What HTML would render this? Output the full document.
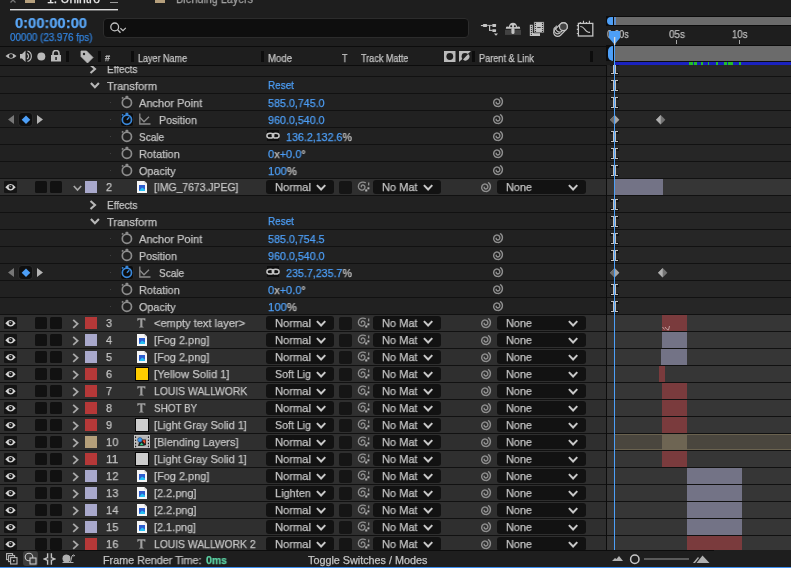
<!DOCTYPE html>
<html><head><meta charset="utf-8">
<style>
html,body{margin:0;padding:0;}
body{width:791px;height:568px;overflow:hidden;position:relative;background:#1e1e1e;font-family:"Liberation Sans",sans-serif;}
.t{position:absolute;white-space:nowrap;line-height:12px;will-change:transform;-webkit-text-stroke:0.25px currentColor;}
svg{display:block;}
</style></head><body>
<div style="position:absolute;left:0px;top:60px;width:606px;height:16px;background:#212121;"></div>
<div style="position:absolute;left:607px;top:60px;width:184px;height:16px;background:#262626;"></div>
<div style="position:absolute;left:0px;top:76px;width:791px;height:1px;background:#111111;"></div>
<svg style="position:absolute;left:89px;top:63.5px;" width="8" height="10" viewBox="0 0 8 10"><path d="M1.5 1 L6 5 L1.5 9" fill="none" stroke="#b8b8b8" stroke-width="2.1"/></svg>
<div class="t" style="left:106.50px;top:63px;font-size:11.5px;color:#c4c4c4;transform:scaleX(0.8698);transform-origin:0 0;">Effects</div>
<div style="position:absolute;left:610px;top:63px;width:9px;height:3px;background:#141414;"></div>
<div style="position:absolute;left:610px;top:72px;width:9px;height:3px;background:#141414;"></div>
<div style="position:absolute;left:611px;top:63px;width:7px;height:1.4px;background:#c2c2c2;"></div>
<div style="position:absolute;left:611px;top:72.6px;width:7px;height:1.4px;background:#c2c2c2;"></div>
<div style="position:absolute;left:612.8px;top:63px;width:1.2px;height:11px;background:#c2c2c2;"></div>
<div style="position:absolute;left:615.2px;top:63px;width:1.2px;height:11px;background:#c2c2c2;"></div>
<div style="position:absolute;left:0px;top:77px;width:606px;height:16px;background:#212121;"></div>
<div style="position:absolute;left:607px;top:77px;width:184px;height:16px;background:#262626;"></div>
<div style="position:absolute;left:0px;top:93px;width:791px;height:1px;background:#111111;"></div>
<svg style="position:absolute;left:89.5px;top:81.5px;" width="10" height="8" viewBox="0 0 10 8"><path d="M0.9 1 L4.9 5.3 L8.9 1" fill="none" stroke="#b8b8b8" stroke-width="2.1"/></svg>
<div class="t" style="left:106.50px;top:80px;font-size:11.5px;color:#c4c4c4;transform:scaleX(0.9625);transform-origin:0 0;">Transform</div>
<div class="t" style="left:267.60px;top:79px;font-size:11.5px;color:#4d9ff7;transform:scaleX(0.8652);transform-origin:0 0;">Reset</div>
<div style="position:absolute;left:610px;top:80px;width:9px;height:3px;background:#141414;"></div>
<div style="position:absolute;left:610px;top:89px;width:9px;height:3px;background:#141414;"></div>
<div style="position:absolute;left:611px;top:80px;width:7px;height:1.4px;background:#c2c2c2;"></div>
<div style="position:absolute;left:611px;top:89.6px;width:7px;height:1.4px;background:#c2c2c2;"></div>
<div style="position:absolute;left:612.8px;top:80px;width:1.2px;height:11px;background:#c2c2c2;"></div>
<div style="position:absolute;left:615.2px;top:80px;width:1.2px;height:11px;background:#c2c2c2;"></div>
<div style="position:absolute;left:0px;top:94px;width:606px;height:16px;background:#212121;"></div>
<div style="position:absolute;left:607px;top:94px;width:184px;height:16px;background:#262626;"></div>
<div style="position:absolute;left:0px;top:110px;width:791px;height:1px;background:#111111;"></div>
<div style="position:absolute;left:110px;top:102px;width:1px;height:1px;background:#404040;"></div>
<svg style="position:absolute;left:120px;top:95px;" width="14" height="14" viewBox="0 0 14 14"><circle cx="6.9" cy="7.7" r="4.6" fill="none" stroke="#8c8c8c" stroke-width="1.7"/><rect x="5.5" y="0.7" width="2.8" height="2.8" rx="0.8" fill="#8c8c8c"/><path d="M1.9 3.6 L3.2 2.3" stroke="#8c8c8c" stroke-width="1.4"/></svg>
<div class="t" style="left:139.20px;top:97px;font-size:11.5px;color:#c4c4c4;transform:scaleX(0.9598);transform-origin:0 0;">Anchor Point</div>
<div class="t" style="left:268.00px;top:97px;font-size:11.5px;color:#4d9ff7;transform:scaleX(0.9317);transform-origin:0 0;">585.0,745.0</div>
<svg style="position:absolute;left:491px;top:95.5px;" width="13" height="13" viewBox="0 0 13 13"><path d="M5.2 6.3 L5.2 6.6 L5.3 6.9 L5.4 7.2 L5.6 7.4 L5.9 7.7 L6.2 7.8 L6.6 7.9 L7.0 7.9 L7.4 7.8 L7.8 7.6 L8.2 7.3 L8.5 7.0 L8.7 6.5 L8.8 6.0 L8.8 5.5 L8.7 5.0 L8.5 4.4 L8.2 4.0 L7.7 3.6 L7.2 3.3 L6.6 3.1 L5.9 3.0 L5.2 3.1 L4.6 3.3 L4.0 3.7 L3.5 4.2 L3.1 4.9 L2.8 5.6 L2.7 6.4 L2.7 7.2 L3.0 8.0 L3.4 8.7 L3.9 9.4 L4.6 9.9 L5.4 10.3 L6.3 10.4 L7.3 10.5 L8.2 10.2 L9.1 9.8 L9.9 9.3 L10.5 8.5 L11.0 7.6 L11.3 6.6 L11.4 5.5 L11.3 4.5 L10.9 3.4 L10.3 2.5 L9.5 1.7" fill="none" stroke="#8e8e8e" stroke-width="1.45" stroke-linecap="round"/></svg>
<div style="position:absolute;left:610px;top:97px;width:9px;height:3px;background:#141414;"></div>
<div style="position:absolute;left:610px;top:106px;width:9px;height:3px;background:#141414;"></div>
<div style="position:absolute;left:611px;top:97px;width:7px;height:1.4px;background:#c2c2c2;"></div>
<div style="position:absolute;left:611px;top:106.6px;width:7px;height:1.4px;background:#c2c2c2;"></div>
<div style="position:absolute;left:612.8px;top:97px;width:1.2px;height:11px;background:#c2c2c2;"></div>
<div style="position:absolute;left:615.2px;top:97px;width:1.2px;height:11px;background:#c2c2c2;"></div>
<div style="position:absolute;left:0px;top:111px;width:606px;height:16px;background:#212121;"></div>
<div style="position:absolute;left:607px;top:111px;width:184px;height:16px;background:#262626;"></div>
<div style="position:absolute;left:0px;top:127px;width:791px;height:1px;background:#111111;"></div>
<div style="position:absolute;left:110px;top:119px;width:1px;height:1px;background:#404040;"></div>
<svg style="position:absolute;left:8px;top:115px;" width="7" height="9" viewBox="0 0 7 9"><path d="M6 0 L0 4.5 L6 9Z" fill="#777"/></svg>
<div style="position:absolute;left:19px;top:113px;width:13px;height:13px;background:#0f0f0f;border-radius:3px;box-shadow:0 0 0 0.5px #333;"></div>
<svg style="position:absolute;left:21px;top:115px;" width="10" height="10" viewBox="0 0 10 10"><path d="M5 0.5 L9.3 4.8 L5 9.1 L0.7 4.8Z" fill="#4d9ff7"/></svg>
<svg style="position:absolute;left:37px;top:115px;" width="7" height="9" viewBox="0 0 7 9"><path d="M0 0 L6 4.5 L0 9Z" fill="#b4b4b4"/></svg>
<div style="position:absolute;left:120px;top:111.5px;width:14px;height:15px;background:#0c0c0c;border-radius:3px;box-sizing:border-box;border:1px solid #262626;"></div>
<svg style="position:absolute;left:120px;top:112px;" width="14" height="14" viewBox="0 0 14 14"><circle cx="6.9" cy="7.7" r="4.6" fill="none" stroke="#3a88da" stroke-width="1.7"/><rect x="5.5" y="0.7" width="2.8" height="2.8" rx="0.8" fill="#3a88da"/><path d="M1.9 3.6 L3.2 2.3" stroke="#3a88da" stroke-width="1.4"/><path d="M6.9 7.7 L9.3 5.3" stroke="#3a88da" stroke-width="1.5"/></svg>
<svg style="position:absolute;left:139px;top:113px;" width="12" height="12" viewBox="0 0 12 12"><path d="M0.8 0.5 V11 H11.5" fill="none" stroke="#8a8a8a" stroke-width="1.3"/><path d="M1 4.5 L5 8.8 L10 3.8" fill="none" stroke="#8a8a8a" stroke-width="1.3"/></svg>
<div class="t" style="left:158.80px;top:114px;font-size:11.5px;color:#c4c4c4;transform:scaleX(0.9291);transform-origin:0 0;">Position</div>
<div class="t" style="left:268.00px;top:114px;font-size:11.5px;color:#4d9ff7;transform:scaleX(0.9317);transform-origin:0 0;">960.0,540.0</div>
<svg style="position:absolute;left:491px;top:112.5px;" width="13" height="13" viewBox="0 0 13 13"><path d="M5.2 6.3 L5.2 6.6 L5.3 6.9 L5.4 7.2 L5.6 7.4 L5.9 7.7 L6.2 7.8 L6.6 7.9 L7.0 7.9 L7.4 7.8 L7.8 7.6 L8.2 7.3 L8.5 7.0 L8.7 6.5 L8.8 6.0 L8.8 5.5 L8.7 5.0 L8.5 4.4 L8.2 4.0 L7.7 3.6 L7.2 3.3 L6.6 3.1 L5.9 3.0 L5.2 3.1 L4.6 3.3 L4.0 3.7 L3.5 4.2 L3.1 4.9 L2.8 5.6 L2.7 6.4 L2.7 7.2 L3.0 8.0 L3.4 8.7 L3.9 9.4 L4.6 9.9 L5.4 10.3 L6.3 10.4 L7.3 10.5 L8.2 10.2 L9.1 9.8 L9.9 9.3 L10.5 8.5 L11.0 7.6 L11.3 6.6 L11.4 5.5 L11.3 4.5 L10.9 3.4 L10.3 2.5 L9.5 1.7" fill="none" stroke="#8e8e8e" stroke-width="1.45" stroke-linecap="round"/></svg>
<svg style="position:absolute;left:610px;top:115px;" width="10" height="10" viewBox="0 0 10 10"><path d="M4.7 0 L9.4 4.7 L4.7 9.4 L0 4.7Z" fill="#a8a8a8"/><path d="M4.7 0 L0 4.7 L4.7 9.4Z" fill="#6e6e6e"/></svg>
<svg style="position:absolute;left:656px;top:115px;" width="10" height="10" viewBox="0 0 10 10"><path d="M4.7 0 L9.4 4.7 L4.7 9.4 L0 4.7Z" fill="#747474"/><path d="M4.7 0 L0 4.7 L4.7 9.4Z" fill="#b0b0b0"/></svg>
<div style="position:absolute;left:0px;top:128px;width:606px;height:16px;background:#212121;"></div>
<div style="position:absolute;left:607px;top:128px;width:184px;height:16px;background:#262626;"></div>
<div style="position:absolute;left:0px;top:144px;width:791px;height:1px;background:#111111;"></div>
<div style="position:absolute;left:110px;top:136px;width:1px;height:1px;background:#404040;"></div>
<svg style="position:absolute;left:120px;top:129px;" width="14" height="14" viewBox="0 0 14 14"><circle cx="6.9" cy="7.7" r="4.6" fill="none" stroke="#8c8c8c" stroke-width="1.7"/><rect x="5.5" y="0.7" width="2.8" height="2.8" rx="0.8" fill="#8c8c8c"/><path d="M1.9 3.6 L3.2 2.3" stroke="#8c8c8c" stroke-width="1.4"/></svg>
<div class="t" style="left:139.20px;top:131px;font-size:11.5px;color:#c4c4c4;transform:scaleX(0.8765);transform-origin:0 0;">Scale</div>
<div style="position:absolute;left:267px;top:130px;width:12px;height:11px;background:#0e0e0e;"></div>
<svg style="position:absolute;left:265px;top:130px;" width="16" height="11" viewBox="0 0 16 11"><ellipse cx="5.3" cy="5.7" rx="3.4" ry="2.4" fill="none" stroke="#c4c4c4" stroke-width="1.5"/><ellipse cx="10.7" cy="5.7" rx="3.4" ry="2.4" fill="none" stroke="#c4c4c4" stroke-width="1.5"/><path d="M7.2 3.7 A3.4 2.4 0 0 1 8.7 5.2" fill="none" stroke="#c4c4c4" stroke-width="1.5"/></svg>
<div class="t" style="left:286.00px;top:131px;font-size:11.5px;color:#4d9ff7;transform:scaleX(0.9296);transform-origin:0 0;">136.2,132.6<span style="color:#c4c4c4">%</span></div>
<svg style="position:absolute;left:491px;top:129.5px;" width="13" height="13" viewBox="0 0 13 13"><path d="M5.2 6.3 L5.2 6.6 L5.3 6.9 L5.4 7.2 L5.6 7.4 L5.9 7.7 L6.2 7.8 L6.6 7.9 L7.0 7.9 L7.4 7.8 L7.8 7.6 L8.2 7.3 L8.5 7.0 L8.7 6.5 L8.8 6.0 L8.8 5.5 L8.7 5.0 L8.5 4.4 L8.2 4.0 L7.7 3.6 L7.2 3.3 L6.6 3.1 L5.9 3.0 L5.2 3.1 L4.6 3.3 L4.0 3.7 L3.5 4.2 L3.1 4.9 L2.8 5.6 L2.7 6.4 L2.7 7.2 L3.0 8.0 L3.4 8.7 L3.9 9.4 L4.6 9.9 L5.4 10.3 L6.3 10.4 L7.3 10.5 L8.2 10.2 L9.1 9.8 L9.9 9.3 L10.5 8.5 L11.0 7.6 L11.3 6.6 L11.4 5.5 L11.3 4.5 L10.9 3.4 L10.3 2.5 L9.5 1.7" fill="none" stroke="#8e8e8e" stroke-width="1.45" stroke-linecap="round"/></svg>
<div style="position:absolute;left:610px;top:131px;width:9px;height:3px;background:#141414;"></div>
<div style="position:absolute;left:610px;top:140px;width:9px;height:3px;background:#141414;"></div>
<div style="position:absolute;left:611px;top:131px;width:7px;height:1.4px;background:#c2c2c2;"></div>
<div style="position:absolute;left:611px;top:140.6px;width:7px;height:1.4px;background:#c2c2c2;"></div>
<div style="position:absolute;left:612.8px;top:131px;width:1.2px;height:11px;background:#c2c2c2;"></div>
<div style="position:absolute;left:615.2px;top:131px;width:1.2px;height:11px;background:#c2c2c2;"></div>
<div style="position:absolute;left:0px;top:145px;width:606px;height:16px;background:#212121;"></div>
<div style="position:absolute;left:607px;top:145px;width:184px;height:16px;background:#262626;"></div>
<div style="position:absolute;left:0px;top:161px;width:791px;height:1px;background:#111111;"></div>
<div style="position:absolute;left:110px;top:153px;width:1px;height:1px;background:#404040;"></div>
<svg style="position:absolute;left:120px;top:146px;" width="14" height="14" viewBox="0 0 14 14"><circle cx="6.9" cy="7.7" r="4.6" fill="none" stroke="#8c8c8c" stroke-width="1.7"/><rect x="5.5" y="0.7" width="2.8" height="2.8" rx="0.8" fill="#8c8c8c"/><path d="M1.9 3.6 L3.2 2.3" stroke="#8c8c8c" stroke-width="1.4"/></svg>
<div class="t" style="left:139.20px;top:148px;font-size:11.5px;color:#c4c4c4;transform:scaleX(0.9522);transform-origin:0 0;">Rotation</div>
<div class="t" style="left:268.00px;top:148px;font-size:11.5px;color:#4d9ff7;transform:scaleX(0.9582);transform-origin:0 0;">0<span style="color:#c4c4c4">x</span>+0.0<span style="color:#c4c4c4">°</span></div>
<svg style="position:absolute;left:491px;top:146.5px;" width="13" height="13" viewBox="0 0 13 13"><path d="M5.2 6.3 L5.2 6.6 L5.3 6.9 L5.4 7.2 L5.6 7.4 L5.9 7.7 L6.2 7.8 L6.6 7.9 L7.0 7.9 L7.4 7.8 L7.8 7.6 L8.2 7.3 L8.5 7.0 L8.7 6.5 L8.8 6.0 L8.8 5.5 L8.7 5.0 L8.5 4.4 L8.2 4.0 L7.7 3.6 L7.2 3.3 L6.6 3.1 L5.9 3.0 L5.2 3.1 L4.6 3.3 L4.0 3.7 L3.5 4.2 L3.1 4.9 L2.8 5.6 L2.7 6.4 L2.7 7.2 L3.0 8.0 L3.4 8.7 L3.9 9.4 L4.6 9.9 L5.4 10.3 L6.3 10.4 L7.3 10.5 L8.2 10.2 L9.1 9.8 L9.9 9.3 L10.5 8.5 L11.0 7.6 L11.3 6.6 L11.4 5.5 L11.3 4.5 L10.9 3.4 L10.3 2.5 L9.5 1.7" fill="none" stroke="#8e8e8e" stroke-width="1.45" stroke-linecap="round"/></svg>
<div style="position:absolute;left:610px;top:148px;width:9px;height:3px;background:#141414;"></div>
<div style="position:absolute;left:610px;top:157px;width:9px;height:3px;background:#141414;"></div>
<div style="position:absolute;left:611px;top:148px;width:7px;height:1.4px;background:#c2c2c2;"></div>
<div style="position:absolute;left:611px;top:157.6px;width:7px;height:1.4px;background:#c2c2c2;"></div>
<div style="position:absolute;left:612.8px;top:148px;width:1.2px;height:11px;background:#c2c2c2;"></div>
<div style="position:absolute;left:615.2px;top:148px;width:1.2px;height:11px;background:#c2c2c2;"></div>
<div style="position:absolute;left:0px;top:162px;width:606px;height:16px;background:#212121;"></div>
<div style="position:absolute;left:607px;top:162px;width:184px;height:16px;background:#262626;"></div>
<div style="position:absolute;left:0px;top:178px;width:791px;height:1px;background:#111111;"></div>
<div style="position:absolute;left:110px;top:170px;width:1px;height:1px;background:#404040;"></div>
<svg style="position:absolute;left:120px;top:163px;" width="14" height="14" viewBox="0 0 14 14"><circle cx="6.9" cy="7.7" r="4.6" fill="none" stroke="#8c8c8c" stroke-width="1.7"/><rect x="5.5" y="0.7" width="2.8" height="2.8" rx="0.8" fill="#8c8c8c"/><path d="M1.9 3.6 L3.2 2.3" stroke="#8c8c8c" stroke-width="1.4"/></svg>
<div class="t" style="left:139.20px;top:165px;font-size:11.5px;color:#c4c4c4;transform:scaleX(0.9385);transform-origin:0 0;">Opacity</div>
<div class="t" style="left:268.00px;top:165px;font-size:11.5px;color:#4d9ff7;transform:scaleX(0.9796);transform-origin:0 0;">100<span style="color:#c4c4c4">%</span></div>
<svg style="position:absolute;left:491px;top:163.5px;" width="13" height="13" viewBox="0 0 13 13"><path d="M5.2 6.3 L5.2 6.6 L5.3 6.9 L5.4 7.2 L5.6 7.4 L5.9 7.7 L6.2 7.8 L6.6 7.9 L7.0 7.9 L7.4 7.8 L7.8 7.6 L8.2 7.3 L8.5 7.0 L8.7 6.5 L8.8 6.0 L8.8 5.5 L8.7 5.0 L8.5 4.4 L8.2 4.0 L7.7 3.6 L7.2 3.3 L6.6 3.1 L5.9 3.0 L5.2 3.1 L4.6 3.3 L4.0 3.7 L3.5 4.2 L3.1 4.9 L2.8 5.6 L2.7 6.4 L2.7 7.2 L3.0 8.0 L3.4 8.7 L3.9 9.4 L4.6 9.9 L5.4 10.3 L6.3 10.4 L7.3 10.5 L8.2 10.2 L9.1 9.8 L9.9 9.3 L10.5 8.5 L11.0 7.6 L11.3 6.6 L11.4 5.5 L11.3 4.5 L10.9 3.4 L10.3 2.5 L9.5 1.7" fill="none" stroke="#8e8e8e" stroke-width="1.45" stroke-linecap="round"/></svg>
<div style="position:absolute;left:610px;top:165px;width:9px;height:3px;background:#141414;"></div>
<div style="position:absolute;left:610px;top:174px;width:9px;height:3px;background:#141414;"></div>
<div style="position:absolute;left:611px;top:165px;width:7px;height:1.4px;background:#c2c2c2;"></div>
<div style="position:absolute;left:611px;top:174.6px;width:7px;height:1.4px;background:#c2c2c2;"></div>
<div style="position:absolute;left:612.8px;top:165px;width:1.2px;height:11px;background:#c2c2c2;"></div>
<div style="position:absolute;left:615.2px;top:165px;width:1.2px;height:11px;background:#c2c2c2;"></div>
<div style="position:absolute;left:0px;top:179px;width:606px;height:16px;background:#2f2f2f;"></div>
<div style="position:absolute;left:607px;top:179px;width:184px;height:16px;background:#363636;"></div>
<div style="position:absolute;left:0px;top:195px;width:791px;height:1px;background:#111111;"></div>
<div style="position:absolute;left:4px;top:180.5px;width:12.5px;height:12.5px;background:#141414;border-radius:1px;"></div>
<svg style="position:absolute;left:5px;top:182.5px;" width="11" height="9" viewBox="0 0 11 9"><path d="M0.3 4.2 Q5.5 -2.3 10.7 4.2 Q5.5 10.7 0.3 4.2Z" fill="#d4d4d4"/><circle cx="5.7" cy="4.1" r="2.1" fill="#141414"/><circle cx="5.2" cy="3.5" r="0.7" fill="#909090"/></svg>
<div style="position:absolute;left:35px;top:181px;width:11.5px;height:11.5px;background:#111111;border-radius:1.5px;"></div>
<div style="position:absolute;left:49.6px;top:181px;width:12px;height:11.5px;background:#111111;border-radius:1.5px;"></div>
<svg style="position:absolute;left:73px;top:185px;" width="9" height="7" viewBox="0 0 9 7"><path d="M0.8 1 L4.5 5 L8.2 1" fill="none" stroke="#a8a8a8" stroke-width="1.7"/></svg>
<div style="position:absolute;left:85px;top:181px;width:12px;height:12px;background:#a9a9cc;"></div>
<div class="t" style="left:106.20px;top:181px;font-size:11.5px;color:#c4c4c4;transform:scaleX(0.9375);transform-origin:0 0;">2</div>
<svg style="position:absolute;left:137px;top:181px;" width="10" height="12" viewBox="0 0 10 12"><path d="M0 0 H7.4 L10 2.6 V12 H0Z" fill="#f6f6f6"/><path d="M7.4 0 V2.6 H10" fill="#cfcfcf"/><rect x="2" y="4" width="6" height="6" fill="#2f5ed0"/><path d="M2 10 L5 6.4 L8 8.6 V10Z" fill="#26c0f2"/></svg>
<div class="t" style="left:154.20px;top:181px;font-size:11.5px;color:#c4c4c4;transform:scaleX(0.9046);transform-origin:0 0;">[IMG_7673.JPEG]</div>
<div style="position:absolute;left:266px;top:180px;width:68px;height:14px;background:#121212;border-radius:3px;"></div>
<div class="t" style="left:274.50px;top:181px;font-size:11.5px;color:#c4c4c4;transform:scaleX(0.9717);transform-origin:0 0;">Normal</div>
<svg style="position:absolute;left:316px;top:183.5px;" width="10" height="8" viewBox="0 0 10 8"><path d="M0.9 1.1 L5.1 5.5 L9.3 1.1" fill="none" stroke="#c8c8c8" stroke-width="2"/></svg>
<div style="position:absolute;left:339px;top:181px;width:13px;height:13px;background:#151515;border-radius:2px;"></div>
<svg style="position:absolute;left:355.5px;top:179.5px;" width="14" height="14" viewBox="0 0 14 14"><path d="M5.4 6.8 L5.3 6.6 L5.3 6.3 L5.3 6.0 L5.5 5.8 L5.6 5.5 L5.9 5.3 L6.2 5.1 L6.6 5.0 L7.0 5.0 L7.4 5.1 L7.8 5.3 L8.2 5.5 L8.5 5.9 L8.8 6.3 L8.9 6.9 L8.9 7.4 L8.8 8.0 L8.6 8.5 L8.3 9.0 L7.8 9.4 L7.2 9.8 L6.6 10.0 L5.9 10.1 L5.2 10.0 L4.5 9.7 L3.9 9.4 L3.3 8.8 L2.8 8.1 L2.5 7.4 L2.4 6.6 L2.5 5.7 L2.7 4.8 L3.1 4.0 L3.7 3.3 L4.4 2.7 L5.3 2.3 L6.3 2.1 L7.3 2.1 L8.3 2.3 L9.3 2.7" fill="none" stroke="#8e8e8e" stroke-width="1.3" stroke-linecap="round"/><rect x="12.1" y="2.5" width="1.2" height="2.9" fill="#9a9a9a"/><rect x="9.2" y="9.4" width="2.1" height="2.1" fill="#b0b0b0"/><rect x="11.4" y="7.3" width="2" height="2" fill="#b0b0b0"/></svg>
<div style="position:absolute;left:373px;top:180px;width:68px;height:14px;background:#121212;border-radius:3px;"></div>
<div class="t" style="left:381.50px;top:181px;font-size:11.5px;color:#c4c4c4;transform:scaleX(0.9582);transform-origin:0 0;">No Mat</div>
<svg style="position:absolute;left:423px;top:183.5px;" width="10" height="8" viewBox="0 0 10 8"><path d="M0.9 1.1 L5.1 5.5 L9.3 1.1" fill="none" stroke="#c8c8c8" stroke-width="2"/></svg>
<svg style="position:absolute;left:478.5px;top:180.5px;" width="13" height="13" viewBox="0 0 13 13"><path d="M5.2 6.3 L5.2 6.6 L5.3 6.9 L5.4 7.2 L5.6 7.4 L5.9 7.7 L6.2 7.8 L6.6 7.9 L7.0 7.9 L7.4 7.8 L7.8 7.6 L8.2 7.3 L8.5 7.0 L8.7 6.5 L8.8 6.0 L8.8 5.5 L8.7 5.0 L8.5 4.4 L8.2 4.0 L7.7 3.6 L7.2 3.3 L6.6 3.1 L5.9 3.0 L5.2 3.1 L4.6 3.3 L4.0 3.7 L3.5 4.2 L3.1 4.9 L2.8 5.6 L2.7 6.4 L2.7 7.2 L3.0 8.0 L3.4 8.7 L3.9 9.4 L4.6 9.9 L5.4 10.3 L6.3 10.4 L7.3 10.5 L8.2 10.2 L9.1 9.8 L9.9 9.3 L10.5 8.5 L11.0 7.6 L11.3 6.6 L11.4 5.5 L11.3 4.5 L10.9 3.4 L10.3 2.5 L9.5 1.7" fill="none" stroke="#8e8e8e" stroke-width="1.45" stroke-linecap="round"/></svg>
<div style="position:absolute;left:497px;top:180px;width:89px;height:14px;background:#121212;border-radius:3px;"></div>
<div class="t" style="left:505.60px;top:181px;font-size:11.5px;color:#c4c4c4;transform:scaleX(0.9455);transform-origin:0 0;">None</div>
<svg style="position:absolute;left:568px;top:183.5px;" width="10" height="8" viewBox="0 0 10 8"><path d="M0.9 1.1 L5.1 5.5 L9.3 1.1" fill="none" stroke="#c8c8c8" stroke-width="2"/></svg>
<div style="position:absolute;left:615px;top:179px;width:48px;height:16px;background:#737386;"></div>
<div style="position:absolute;left:0px;top:196px;width:606px;height:16px;background:#212121;"></div>
<div style="position:absolute;left:607px;top:196px;width:184px;height:16px;background:#262626;"></div>
<div style="position:absolute;left:0px;top:212px;width:791px;height:1px;background:#111111;"></div>
<svg style="position:absolute;left:89px;top:199.5px;" width="8" height="10" viewBox="0 0 8 10"><path d="M1.5 1 L6 5 L1.5 9" fill="none" stroke="#b8b8b8" stroke-width="2.1"/></svg>
<div class="t" style="left:106.50px;top:199px;font-size:11.5px;color:#c4c4c4;transform:scaleX(0.8698);transform-origin:0 0;">Effects</div>
<div style="position:absolute;left:610px;top:199px;width:9px;height:3px;background:#141414;"></div>
<div style="position:absolute;left:610px;top:208px;width:9px;height:3px;background:#141414;"></div>
<div style="position:absolute;left:611px;top:199px;width:7px;height:1.4px;background:#c2c2c2;"></div>
<div style="position:absolute;left:611px;top:208.6px;width:7px;height:1.4px;background:#c2c2c2;"></div>
<div style="position:absolute;left:612.8px;top:199px;width:1.2px;height:11px;background:#c2c2c2;"></div>
<div style="position:absolute;left:615.2px;top:199px;width:1.2px;height:11px;background:#c2c2c2;"></div>
<div style="position:absolute;left:0px;top:213px;width:606px;height:16px;background:#212121;"></div>
<div style="position:absolute;left:607px;top:213px;width:184px;height:16px;background:#262626;"></div>
<div style="position:absolute;left:0px;top:229px;width:791px;height:1px;background:#111111;"></div>
<svg style="position:absolute;left:89.5px;top:217.5px;" width="10" height="8" viewBox="0 0 10 8"><path d="M0.9 1 L4.9 5.3 L8.9 1" fill="none" stroke="#b8b8b8" stroke-width="2.1"/></svg>
<div class="t" style="left:106.50px;top:216px;font-size:11.5px;color:#c4c4c4;transform:scaleX(0.9625);transform-origin:0 0;">Transform</div>
<div class="t" style="left:267.60px;top:215px;font-size:11.5px;color:#4d9ff7;transform:scaleX(0.8652);transform-origin:0 0;">Reset</div>
<div style="position:absolute;left:610px;top:216px;width:9px;height:3px;background:#141414;"></div>
<div style="position:absolute;left:610px;top:225px;width:9px;height:3px;background:#141414;"></div>
<div style="position:absolute;left:611px;top:216px;width:7px;height:1.4px;background:#c2c2c2;"></div>
<div style="position:absolute;left:611px;top:225.6px;width:7px;height:1.4px;background:#c2c2c2;"></div>
<div style="position:absolute;left:612.8px;top:216px;width:1.2px;height:11px;background:#c2c2c2;"></div>
<div style="position:absolute;left:615.2px;top:216px;width:1.2px;height:11px;background:#c2c2c2;"></div>
<div style="position:absolute;left:0px;top:230px;width:606px;height:16px;background:#212121;"></div>
<div style="position:absolute;left:607px;top:230px;width:184px;height:16px;background:#262626;"></div>
<div style="position:absolute;left:0px;top:246px;width:791px;height:1px;background:#111111;"></div>
<div style="position:absolute;left:110px;top:238px;width:1px;height:1px;background:#404040;"></div>
<svg style="position:absolute;left:120px;top:231px;" width="14" height="14" viewBox="0 0 14 14"><circle cx="6.9" cy="7.7" r="4.6" fill="none" stroke="#8c8c8c" stroke-width="1.7"/><rect x="5.5" y="0.7" width="2.8" height="2.8" rx="0.8" fill="#8c8c8c"/><path d="M1.9 3.6 L3.2 2.3" stroke="#8c8c8c" stroke-width="1.4"/></svg>
<div class="t" style="left:139.20px;top:233px;font-size:11.5px;color:#c4c4c4;transform:scaleX(0.9598);transform-origin:0 0;">Anchor Point</div>
<div class="t" style="left:268.00px;top:233px;font-size:11.5px;color:#4d9ff7;transform:scaleX(0.9317);transform-origin:0 0;">585.0,754.5</div>
<svg style="position:absolute;left:491px;top:231.5px;" width="13" height="13" viewBox="0 0 13 13"><path d="M5.2 6.3 L5.2 6.6 L5.3 6.9 L5.4 7.2 L5.6 7.4 L5.9 7.7 L6.2 7.8 L6.6 7.9 L7.0 7.9 L7.4 7.8 L7.8 7.6 L8.2 7.3 L8.5 7.0 L8.7 6.5 L8.8 6.0 L8.8 5.5 L8.7 5.0 L8.5 4.4 L8.2 4.0 L7.7 3.6 L7.2 3.3 L6.6 3.1 L5.9 3.0 L5.2 3.1 L4.6 3.3 L4.0 3.7 L3.5 4.2 L3.1 4.9 L2.8 5.6 L2.7 6.4 L2.7 7.2 L3.0 8.0 L3.4 8.7 L3.9 9.4 L4.6 9.9 L5.4 10.3 L6.3 10.4 L7.3 10.5 L8.2 10.2 L9.1 9.8 L9.9 9.3 L10.5 8.5 L11.0 7.6 L11.3 6.6 L11.4 5.5 L11.3 4.5 L10.9 3.4 L10.3 2.5 L9.5 1.7" fill="none" stroke="#8e8e8e" stroke-width="1.45" stroke-linecap="round"/></svg>
<div style="position:absolute;left:610px;top:233px;width:9px;height:3px;background:#141414;"></div>
<div style="position:absolute;left:610px;top:242px;width:9px;height:3px;background:#141414;"></div>
<div style="position:absolute;left:611px;top:233px;width:7px;height:1.4px;background:#c2c2c2;"></div>
<div style="position:absolute;left:611px;top:242.6px;width:7px;height:1.4px;background:#c2c2c2;"></div>
<div style="position:absolute;left:612.8px;top:233px;width:1.2px;height:11px;background:#c2c2c2;"></div>
<div style="position:absolute;left:615.2px;top:233px;width:1.2px;height:11px;background:#c2c2c2;"></div>
<div style="position:absolute;left:0px;top:247px;width:606px;height:16px;background:#212121;"></div>
<div style="position:absolute;left:607px;top:247px;width:184px;height:16px;background:#262626;"></div>
<div style="position:absolute;left:0px;top:263px;width:791px;height:1px;background:#111111;"></div>
<div style="position:absolute;left:110px;top:255px;width:1px;height:1px;background:#404040;"></div>
<svg style="position:absolute;left:120px;top:248px;" width="14" height="14" viewBox="0 0 14 14"><circle cx="6.9" cy="7.7" r="4.6" fill="none" stroke="#8c8c8c" stroke-width="1.7"/><rect x="5.5" y="0.7" width="2.8" height="2.8" rx="0.8" fill="#8c8c8c"/><path d="M1.9 3.6 L3.2 2.3" stroke="#8c8c8c" stroke-width="1.4"/></svg>
<div class="t" style="left:139.20px;top:250px;font-size:11.5px;color:#c4c4c4;transform:scaleX(0.9291);transform-origin:0 0;">Position</div>
<div class="t" style="left:268.00px;top:250px;font-size:11.5px;color:#4d9ff7;transform:scaleX(0.9317);transform-origin:0 0;">960.0,540.0</div>
<svg style="position:absolute;left:491px;top:248.5px;" width="13" height="13" viewBox="0 0 13 13"><path d="M5.2 6.3 L5.2 6.6 L5.3 6.9 L5.4 7.2 L5.6 7.4 L5.9 7.7 L6.2 7.8 L6.6 7.9 L7.0 7.9 L7.4 7.8 L7.8 7.6 L8.2 7.3 L8.5 7.0 L8.7 6.5 L8.8 6.0 L8.8 5.5 L8.7 5.0 L8.5 4.4 L8.2 4.0 L7.7 3.6 L7.2 3.3 L6.6 3.1 L5.9 3.0 L5.2 3.1 L4.6 3.3 L4.0 3.7 L3.5 4.2 L3.1 4.9 L2.8 5.6 L2.7 6.4 L2.7 7.2 L3.0 8.0 L3.4 8.7 L3.9 9.4 L4.6 9.9 L5.4 10.3 L6.3 10.4 L7.3 10.5 L8.2 10.2 L9.1 9.8 L9.9 9.3 L10.5 8.5 L11.0 7.6 L11.3 6.6 L11.4 5.5 L11.3 4.5 L10.9 3.4 L10.3 2.5 L9.5 1.7" fill="none" stroke="#8e8e8e" stroke-width="1.45" stroke-linecap="round"/></svg>
<div style="position:absolute;left:610px;top:250px;width:9px;height:3px;background:#141414;"></div>
<div style="position:absolute;left:610px;top:259px;width:9px;height:3px;background:#141414;"></div>
<div style="position:absolute;left:611px;top:250px;width:7px;height:1.4px;background:#c2c2c2;"></div>
<div style="position:absolute;left:611px;top:259.6px;width:7px;height:1.4px;background:#c2c2c2;"></div>
<div style="position:absolute;left:612.8px;top:250px;width:1.2px;height:11px;background:#c2c2c2;"></div>
<div style="position:absolute;left:615.2px;top:250px;width:1.2px;height:11px;background:#c2c2c2;"></div>
<div style="position:absolute;left:0px;top:264px;width:606px;height:16px;background:#212121;"></div>
<div style="position:absolute;left:607px;top:264px;width:184px;height:16px;background:#262626;"></div>
<div style="position:absolute;left:0px;top:280px;width:791px;height:1px;background:#111111;"></div>
<div style="position:absolute;left:110px;top:272px;width:1px;height:1px;background:#404040;"></div>
<svg style="position:absolute;left:8px;top:268px;" width="7" height="9" viewBox="0 0 7 9"><path d="M6 0 L0 4.5 L6 9Z" fill="#777"/></svg>
<div style="position:absolute;left:19px;top:266px;width:13px;height:13px;background:#0f0f0f;border-radius:3px;box-shadow:0 0 0 0.5px #333;"></div>
<svg style="position:absolute;left:21px;top:268px;" width="10" height="10" viewBox="0 0 10 10"><path d="M5 0.5 L9.3 4.8 L5 9.1 L0.7 4.8Z" fill="#4d9ff7"/></svg>
<svg style="position:absolute;left:37px;top:268px;" width="7" height="9" viewBox="0 0 7 9"><path d="M0 0 L6 4.5 L0 9Z" fill="#b4b4b4"/></svg>
<div style="position:absolute;left:120px;top:264.5px;width:14px;height:15px;background:#0c0c0c;border-radius:3px;box-sizing:border-box;border:1px solid #262626;"></div>
<svg style="position:absolute;left:120px;top:265px;" width="14" height="14" viewBox="0 0 14 14"><circle cx="6.9" cy="7.7" r="4.6" fill="none" stroke="#3a88da" stroke-width="1.7"/><rect x="5.5" y="0.7" width="2.8" height="2.8" rx="0.8" fill="#3a88da"/><path d="M1.9 3.6 L3.2 2.3" stroke="#3a88da" stroke-width="1.4"/><path d="M6.9 7.7 L9.3 5.3" stroke="#3a88da" stroke-width="1.5"/></svg>
<svg style="position:absolute;left:139px;top:266px;" width="12" height="12" viewBox="0 0 12 12"><path d="M0.8 0.5 V11 H11.5" fill="none" stroke="#8a8a8a" stroke-width="1.3"/><path d="M1 4.5 L5 8.8 L10 3.8" fill="none" stroke="#8a8a8a" stroke-width="1.3"/></svg>
<div class="t" style="left:158.80px;top:267px;font-size:11.5px;color:#c4c4c4;transform:scaleX(0.8765);transform-origin:0 0;">Scale</div>
<div style="position:absolute;left:267px;top:266px;width:12px;height:11px;background:#0e0e0e;"></div>
<svg style="position:absolute;left:265px;top:266px;" width="16" height="11" viewBox="0 0 16 11"><ellipse cx="5.3" cy="5.7" rx="3.4" ry="2.4" fill="none" stroke="#c4c4c4" stroke-width="1.5"/><ellipse cx="10.7" cy="5.7" rx="3.4" ry="2.4" fill="none" stroke="#c4c4c4" stroke-width="1.5"/><path d="M7.2 3.7 A3.4 2.4 0 0 1 8.7 5.2" fill="none" stroke="#c4c4c4" stroke-width="1.5"/></svg>
<div class="t" style="left:286.00px;top:267px;font-size:11.5px;color:#4d9ff7;transform:scaleX(0.9296);transform-origin:0 0;">235.7,235.7<span style="color:#c4c4c4">%</span></div>
<svg style="position:absolute;left:491px;top:265.5px;" width="13" height="13" viewBox="0 0 13 13"><path d="M5.2 6.3 L5.2 6.6 L5.3 6.9 L5.4 7.2 L5.6 7.4 L5.9 7.7 L6.2 7.8 L6.6 7.9 L7.0 7.9 L7.4 7.8 L7.8 7.6 L8.2 7.3 L8.5 7.0 L8.7 6.5 L8.8 6.0 L8.8 5.5 L8.7 5.0 L8.5 4.4 L8.2 4.0 L7.7 3.6 L7.2 3.3 L6.6 3.1 L5.9 3.0 L5.2 3.1 L4.6 3.3 L4.0 3.7 L3.5 4.2 L3.1 4.9 L2.8 5.6 L2.7 6.4 L2.7 7.2 L3.0 8.0 L3.4 8.7 L3.9 9.4 L4.6 9.9 L5.4 10.3 L6.3 10.4 L7.3 10.5 L8.2 10.2 L9.1 9.8 L9.9 9.3 L10.5 8.5 L11.0 7.6 L11.3 6.6 L11.4 5.5 L11.3 4.5 L10.9 3.4 L10.3 2.5 L9.5 1.7" fill="none" stroke="#8e8e8e" stroke-width="1.45" stroke-linecap="round"/></svg>
<svg style="position:absolute;left:610px;top:268px;" width="10" height="10" viewBox="0 0 10 10"><path d="M4.7 0 L9.4 4.7 L4.7 9.4 L0 4.7Z" fill="#a8a8a8"/><path d="M4.7 0 L0 4.7 L4.7 9.4Z" fill="#6e6e6e"/></svg>
<svg style="position:absolute;left:658px;top:268px;" width="10" height="10" viewBox="0 0 10 10"><path d="M4.7 0 L9.4 4.7 L4.7 9.4 L0 4.7Z" fill="#747474"/><path d="M4.7 0 L0 4.7 L4.7 9.4Z" fill="#b0b0b0"/></svg>
<div style="position:absolute;left:0px;top:281px;width:606px;height:16px;background:#212121;"></div>
<div style="position:absolute;left:607px;top:281px;width:184px;height:16px;background:#262626;"></div>
<div style="position:absolute;left:0px;top:297px;width:791px;height:1px;background:#111111;"></div>
<div style="position:absolute;left:110px;top:289px;width:1px;height:1px;background:#404040;"></div>
<svg style="position:absolute;left:120px;top:282px;" width="14" height="14" viewBox="0 0 14 14"><circle cx="6.9" cy="7.7" r="4.6" fill="none" stroke="#8c8c8c" stroke-width="1.7"/><rect x="5.5" y="0.7" width="2.8" height="2.8" rx="0.8" fill="#8c8c8c"/><path d="M1.9 3.6 L3.2 2.3" stroke="#8c8c8c" stroke-width="1.4"/></svg>
<div class="t" style="left:139.20px;top:284px;font-size:11.5px;color:#c4c4c4;transform:scaleX(0.9522);transform-origin:0 0;">Rotation</div>
<div class="t" style="left:268.00px;top:284px;font-size:11.5px;color:#4d9ff7;transform:scaleX(0.9582);transform-origin:0 0;">0<span style="color:#c4c4c4">x</span>+0.0<span style="color:#c4c4c4">°</span></div>
<svg style="position:absolute;left:491px;top:282.5px;" width="13" height="13" viewBox="0 0 13 13"><path d="M5.2 6.3 L5.2 6.6 L5.3 6.9 L5.4 7.2 L5.6 7.4 L5.9 7.7 L6.2 7.8 L6.6 7.9 L7.0 7.9 L7.4 7.8 L7.8 7.6 L8.2 7.3 L8.5 7.0 L8.7 6.5 L8.8 6.0 L8.8 5.5 L8.7 5.0 L8.5 4.4 L8.2 4.0 L7.7 3.6 L7.2 3.3 L6.6 3.1 L5.9 3.0 L5.2 3.1 L4.6 3.3 L4.0 3.7 L3.5 4.2 L3.1 4.9 L2.8 5.6 L2.7 6.4 L2.7 7.2 L3.0 8.0 L3.4 8.7 L3.9 9.4 L4.6 9.9 L5.4 10.3 L6.3 10.4 L7.3 10.5 L8.2 10.2 L9.1 9.8 L9.9 9.3 L10.5 8.5 L11.0 7.6 L11.3 6.6 L11.4 5.5 L11.3 4.5 L10.9 3.4 L10.3 2.5 L9.5 1.7" fill="none" stroke="#8e8e8e" stroke-width="1.45" stroke-linecap="round"/></svg>
<div style="position:absolute;left:610px;top:284px;width:9px;height:3px;background:#141414;"></div>
<div style="position:absolute;left:610px;top:293px;width:9px;height:3px;background:#141414;"></div>
<div style="position:absolute;left:611px;top:284px;width:7px;height:1.4px;background:#c2c2c2;"></div>
<div style="position:absolute;left:611px;top:293.6px;width:7px;height:1.4px;background:#c2c2c2;"></div>
<div style="position:absolute;left:612.8px;top:284px;width:1.2px;height:11px;background:#c2c2c2;"></div>
<div style="position:absolute;left:615.2px;top:284px;width:1.2px;height:11px;background:#c2c2c2;"></div>
<div style="position:absolute;left:0px;top:298px;width:606px;height:16px;background:#212121;"></div>
<div style="position:absolute;left:607px;top:298px;width:184px;height:16px;background:#262626;"></div>
<div style="position:absolute;left:0px;top:314px;width:791px;height:1px;background:#111111;"></div>
<div style="position:absolute;left:110px;top:306px;width:1px;height:1px;background:#404040;"></div>
<svg style="position:absolute;left:120px;top:299px;" width="14" height="14" viewBox="0 0 14 14"><circle cx="6.9" cy="7.7" r="4.6" fill="none" stroke="#8c8c8c" stroke-width="1.7"/><rect x="5.5" y="0.7" width="2.8" height="2.8" rx="0.8" fill="#8c8c8c"/><path d="M1.9 3.6 L3.2 2.3" stroke="#8c8c8c" stroke-width="1.4"/></svg>
<div class="t" style="left:139.20px;top:301px;font-size:11.5px;color:#c4c4c4;transform:scaleX(0.9385);transform-origin:0 0;">Opacity</div>
<div class="t" style="left:268.00px;top:301px;font-size:11.5px;color:#4d9ff7;transform:scaleX(0.9796);transform-origin:0 0;">100<span style="color:#c4c4c4">%</span></div>
<svg style="position:absolute;left:491px;top:299.5px;" width="13" height="13" viewBox="0 0 13 13"><path d="M5.2 6.3 L5.2 6.6 L5.3 6.9 L5.4 7.2 L5.6 7.4 L5.9 7.7 L6.2 7.8 L6.6 7.9 L7.0 7.9 L7.4 7.8 L7.8 7.6 L8.2 7.3 L8.5 7.0 L8.7 6.5 L8.8 6.0 L8.8 5.5 L8.7 5.0 L8.5 4.4 L8.2 4.0 L7.7 3.6 L7.2 3.3 L6.6 3.1 L5.9 3.0 L5.2 3.1 L4.6 3.3 L4.0 3.7 L3.5 4.2 L3.1 4.9 L2.8 5.6 L2.7 6.4 L2.7 7.2 L3.0 8.0 L3.4 8.7 L3.9 9.4 L4.6 9.9 L5.4 10.3 L6.3 10.4 L7.3 10.5 L8.2 10.2 L9.1 9.8 L9.9 9.3 L10.5 8.5 L11.0 7.6 L11.3 6.6 L11.4 5.5 L11.3 4.5 L10.9 3.4 L10.3 2.5 L9.5 1.7" fill="none" stroke="#8e8e8e" stroke-width="1.45" stroke-linecap="round"/></svg>
<div style="position:absolute;left:610px;top:301px;width:9px;height:3px;background:#141414;"></div>
<div style="position:absolute;left:610px;top:310px;width:9px;height:3px;background:#141414;"></div>
<div style="position:absolute;left:611px;top:301px;width:7px;height:1.4px;background:#c2c2c2;"></div>
<div style="position:absolute;left:611px;top:310.6px;width:7px;height:1.4px;background:#c2c2c2;"></div>
<div style="position:absolute;left:612.8px;top:301px;width:1.2px;height:11px;background:#c2c2c2;"></div>
<div style="position:absolute;left:615.2px;top:301px;width:1.2px;height:11px;background:#c2c2c2;"></div>
<div style="position:absolute;left:0px;top:315px;width:606px;height:16px;background:#2f2f2f;"></div>
<div style="position:absolute;left:607px;top:315px;width:184px;height:16px;background:#363636;"></div>
<div style="position:absolute;left:0px;top:331px;width:791px;height:1px;background:#111111;"></div>
<div style="position:absolute;left:4px;top:316.5px;width:12.5px;height:12.5px;background:#141414;border-radius:1px;"></div>
<svg style="position:absolute;left:5px;top:318.5px;" width="11" height="9" viewBox="0 0 11 9"><path d="M0.3 4.2 Q5.5 -2.3 10.7 4.2 Q5.5 10.7 0.3 4.2Z" fill="#d4d4d4"/><circle cx="5.7" cy="4.1" r="2.1" fill="#141414"/><circle cx="5.2" cy="3.5" r="0.7" fill="#909090"/></svg>
<div style="position:absolute;left:35px;top:317px;width:11.5px;height:11.5px;background:#111111;border-radius:1.5px;"></div>
<div style="position:absolute;left:49.6px;top:317px;width:12px;height:11.5px;background:#111111;border-radius:1.5px;"></div>
<svg style="position:absolute;left:71.6px;top:319px;" width="8" height="10" viewBox="0 0 8 10"><path d="M1.2 0.8 L5.6 4.8 L1.2 8.8" fill="none" stroke="#a8a8a8" stroke-width="1.8"/></svg>
<div style="position:absolute;left:85px;top:317px;width:12px;height:12px;background:#b53838;"></div>
<div class="t" style="left:106.20px;top:317px;font-size:11.5px;color:#c4c4c4;transform:scaleX(0.9375);transform-origin:0 0;">3</div>
<svg style="position:absolute;left:137px;top:318px;" width="9" height="10" viewBox="0 0 9 10"><path d="M0.3 0.3 H8.4 V2.8 H7.7 Q7.5 1.4 5.4 1.4 V8.5 L6.6 9.1 V9.6 H2.1 V9.1 L3.3 8.5 V1.4 Q1.2 1.4 1 2.8 H0.3Z" fill="#a0a0a0"/></svg>
<div class="t" style="left:154.20px;top:317px;font-size:11.5px;color:#c4c4c4;transform:scaleX(0.9619);transform-origin:0 0;">&lt;empty text layer&gt;</div>
<div style="position:absolute;left:266px;top:316px;width:68px;height:14px;background:#121212;border-radius:3px;"></div>
<div class="t" style="left:274.50px;top:317px;font-size:11.5px;color:#c4c4c4;transform:scaleX(0.9717);transform-origin:0 0;">Normal</div>
<svg style="position:absolute;left:316px;top:319.5px;" width="10" height="8" viewBox="0 0 10 8"><path d="M0.9 1.1 L5.1 5.5 L9.3 1.1" fill="none" stroke="#c8c8c8" stroke-width="2"/></svg>
<div style="position:absolute;left:339px;top:317px;width:13px;height:13px;background:#151515;border-radius:2px;"></div>
<svg style="position:absolute;left:355.5px;top:315.5px;" width="14" height="14" viewBox="0 0 14 14"><path d="M5.4 6.8 L5.3 6.6 L5.3 6.3 L5.3 6.0 L5.5 5.8 L5.6 5.5 L5.9 5.3 L6.2 5.1 L6.6 5.0 L7.0 5.0 L7.4 5.1 L7.8 5.3 L8.2 5.5 L8.5 5.9 L8.8 6.3 L8.9 6.9 L8.9 7.4 L8.8 8.0 L8.6 8.5 L8.3 9.0 L7.8 9.4 L7.2 9.8 L6.6 10.0 L5.9 10.1 L5.2 10.0 L4.5 9.7 L3.9 9.4 L3.3 8.8 L2.8 8.1 L2.5 7.4 L2.4 6.6 L2.5 5.7 L2.7 4.8 L3.1 4.0 L3.7 3.3 L4.4 2.7 L5.3 2.3 L6.3 2.1 L7.3 2.1 L8.3 2.3 L9.3 2.7" fill="none" stroke="#8e8e8e" stroke-width="1.3" stroke-linecap="round"/><rect x="12.1" y="2.5" width="1.2" height="2.9" fill="#9a9a9a"/><rect x="9.2" y="9.4" width="2.1" height="2.1" fill="#b0b0b0"/><rect x="11.4" y="7.3" width="2" height="2" fill="#b0b0b0"/></svg>
<div style="position:absolute;left:373px;top:316px;width:68px;height:14px;background:#121212;border-radius:3px;"></div>
<div class="t" style="left:381.50px;top:317px;font-size:11.5px;color:#c4c4c4;transform:scaleX(0.9582);transform-origin:0 0;">No Mat</div>
<svg style="position:absolute;left:423px;top:319.5px;" width="10" height="8" viewBox="0 0 10 8"><path d="M0.9 1.1 L5.1 5.5 L9.3 1.1" fill="none" stroke="#c8c8c8" stroke-width="2"/></svg>
<svg style="position:absolute;left:478.5px;top:316.5px;" width="13" height="13" viewBox="0 0 13 13"><path d="M5.2 6.3 L5.2 6.6 L5.3 6.9 L5.4 7.2 L5.6 7.4 L5.9 7.7 L6.2 7.8 L6.6 7.9 L7.0 7.9 L7.4 7.8 L7.8 7.6 L8.2 7.3 L8.5 7.0 L8.7 6.5 L8.8 6.0 L8.8 5.5 L8.7 5.0 L8.5 4.4 L8.2 4.0 L7.7 3.6 L7.2 3.3 L6.6 3.1 L5.9 3.0 L5.2 3.1 L4.6 3.3 L4.0 3.7 L3.5 4.2 L3.1 4.9 L2.8 5.6 L2.7 6.4 L2.7 7.2 L3.0 8.0 L3.4 8.7 L3.9 9.4 L4.6 9.9 L5.4 10.3 L6.3 10.4 L7.3 10.5 L8.2 10.2 L9.1 9.8 L9.9 9.3 L10.5 8.5 L11.0 7.6 L11.3 6.6 L11.4 5.5 L11.3 4.5 L10.9 3.4 L10.3 2.5 L9.5 1.7" fill="none" stroke="#8e8e8e" stroke-width="1.45" stroke-linecap="round"/></svg>
<div style="position:absolute;left:497px;top:316px;width:89px;height:14px;background:#121212;border-radius:3px;"></div>
<div class="t" style="left:505.60px;top:317px;font-size:11.5px;color:#c4c4c4;transform:scaleX(0.9455);transform-origin:0 0;">None</div>
<svg style="position:absolute;left:568px;top:319.5px;" width="10" height="8" viewBox="0 0 10 8"><path d="M0.9 1.1 L5.1 5.5 L9.3 1.1" fill="none" stroke="#c8c8c8" stroke-width="2"/></svg>
<div style="position:absolute;left:662px;top:315px;width:25px;height:16px;background:#7a3b3d;"></div>
<svg style="position:absolute;left:662px;top:326px;" width="9" height="5" viewBox="0 0 9 5"><path d="M0.5 1 L2.5 3.5 M3 1 L5 3.5 L6.5 4 L7.5 0" fill="none" stroke="#c8a8a8" stroke-width="0.9"/></svg>
<div style="position:absolute;left:0px;top:332px;width:606px;height:16px;background:#2f2f2f;"></div>
<div style="position:absolute;left:607px;top:332px;width:184px;height:16px;background:#363636;"></div>
<div style="position:absolute;left:0px;top:348px;width:791px;height:1px;background:#111111;"></div>
<div style="position:absolute;left:4px;top:333.5px;width:12.5px;height:12.5px;background:#141414;border-radius:1px;"></div>
<svg style="position:absolute;left:5px;top:335.5px;" width="11" height="9" viewBox="0 0 11 9"><path d="M0.3 4.2 Q5.5 -2.3 10.7 4.2 Q5.5 10.7 0.3 4.2Z" fill="#d4d4d4"/><circle cx="5.7" cy="4.1" r="2.1" fill="#141414"/><circle cx="5.2" cy="3.5" r="0.7" fill="#909090"/></svg>
<div style="position:absolute;left:35px;top:334px;width:11.5px;height:11.5px;background:#111111;border-radius:1.5px;"></div>
<div style="position:absolute;left:49.6px;top:334px;width:12px;height:11.5px;background:#111111;border-radius:1.5px;"></div>
<svg style="position:absolute;left:71.6px;top:336px;" width="8" height="10" viewBox="0 0 8 10"><path d="M1.2 0.8 L5.6 4.8 L1.2 8.8" fill="none" stroke="#a8a8a8" stroke-width="1.8"/></svg>
<div style="position:absolute;left:85px;top:334px;width:12px;height:12px;background:#a9a9cc;"></div>
<div class="t" style="left:106.20px;top:334px;font-size:11.5px;color:#c4c4c4;transform:scaleX(0.9375);transform-origin:0 0;">4</div>
<svg style="position:absolute;left:137px;top:334px;" width="10" height="12" viewBox="0 0 10 12"><path d="M0 0 H7.4 L10 2.6 V12 H0Z" fill="#f6f6f6"/><path d="M7.4 0 V2.6 H10" fill="#cfcfcf"/><rect x="2" y="4" width="6" height="6" fill="#2f5ed0"/><path d="M2 10 L5 6.4 L8 8.6 V10Z" fill="#26c0f2"/></svg>
<div class="t" style="left:154.20px;top:334px;font-size:11.5px;color:#c4c4c4;transform:scaleX(0.9519);transform-origin:0 0;">[Fog 2.png]</div>
<div style="position:absolute;left:266px;top:333px;width:68px;height:14px;background:#121212;border-radius:3px;"></div>
<div class="t" style="left:274.50px;top:334px;font-size:11.5px;color:#c4c4c4;transform:scaleX(0.9717);transform-origin:0 0;">Normal</div>
<svg style="position:absolute;left:316px;top:336.5px;" width="10" height="8" viewBox="0 0 10 8"><path d="M0.9 1.1 L5.1 5.5 L9.3 1.1" fill="none" stroke="#c8c8c8" stroke-width="2"/></svg>
<div style="position:absolute;left:339px;top:334px;width:13px;height:13px;background:#151515;border-radius:2px;"></div>
<svg style="position:absolute;left:355.5px;top:332.5px;" width="14" height="14" viewBox="0 0 14 14"><path d="M5.4 6.8 L5.3 6.6 L5.3 6.3 L5.3 6.0 L5.5 5.8 L5.6 5.5 L5.9 5.3 L6.2 5.1 L6.6 5.0 L7.0 5.0 L7.4 5.1 L7.8 5.3 L8.2 5.5 L8.5 5.9 L8.8 6.3 L8.9 6.9 L8.9 7.4 L8.8 8.0 L8.6 8.5 L8.3 9.0 L7.8 9.4 L7.2 9.8 L6.6 10.0 L5.9 10.1 L5.2 10.0 L4.5 9.7 L3.9 9.4 L3.3 8.8 L2.8 8.1 L2.5 7.4 L2.4 6.6 L2.5 5.7 L2.7 4.8 L3.1 4.0 L3.7 3.3 L4.4 2.7 L5.3 2.3 L6.3 2.1 L7.3 2.1 L8.3 2.3 L9.3 2.7" fill="none" stroke="#8e8e8e" stroke-width="1.3" stroke-linecap="round"/><rect x="12.1" y="2.5" width="1.2" height="2.9" fill="#9a9a9a"/><rect x="9.2" y="9.4" width="2.1" height="2.1" fill="#b0b0b0"/><rect x="11.4" y="7.3" width="2" height="2" fill="#b0b0b0"/></svg>
<div style="position:absolute;left:373px;top:333px;width:68px;height:14px;background:#121212;border-radius:3px;"></div>
<div class="t" style="left:381.50px;top:334px;font-size:11.5px;color:#c4c4c4;transform:scaleX(0.9582);transform-origin:0 0;">No Mat</div>
<svg style="position:absolute;left:423px;top:336.5px;" width="10" height="8" viewBox="0 0 10 8"><path d="M0.9 1.1 L5.1 5.5 L9.3 1.1" fill="none" stroke="#c8c8c8" stroke-width="2"/></svg>
<svg style="position:absolute;left:478.5px;top:333.5px;" width="13" height="13" viewBox="0 0 13 13"><path d="M5.2 6.3 L5.2 6.6 L5.3 6.9 L5.4 7.2 L5.6 7.4 L5.9 7.7 L6.2 7.8 L6.6 7.9 L7.0 7.9 L7.4 7.8 L7.8 7.6 L8.2 7.3 L8.5 7.0 L8.7 6.5 L8.8 6.0 L8.8 5.5 L8.7 5.0 L8.5 4.4 L8.2 4.0 L7.7 3.6 L7.2 3.3 L6.6 3.1 L5.9 3.0 L5.2 3.1 L4.6 3.3 L4.0 3.7 L3.5 4.2 L3.1 4.9 L2.8 5.6 L2.7 6.4 L2.7 7.2 L3.0 8.0 L3.4 8.7 L3.9 9.4 L4.6 9.9 L5.4 10.3 L6.3 10.4 L7.3 10.5 L8.2 10.2 L9.1 9.8 L9.9 9.3 L10.5 8.5 L11.0 7.6 L11.3 6.6 L11.4 5.5 L11.3 4.5 L10.9 3.4 L10.3 2.5 L9.5 1.7" fill="none" stroke="#8e8e8e" stroke-width="1.45" stroke-linecap="round"/></svg>
<div style="position:absolute;left:497px;top:333px;width:89px;height:14px;background:#121212;border-radius:3px;"></div>
<div class="t" style="left:505.60px;top:334px;font-size:11.5px;color:#c4c4c4;transform:scaleX(0.9455);transform-origin:0 0;">None</div>
<svg style="position:absolute;left:568px;top:336.5px;" width="10" height="8" viewBox="0 0 10 8"><path d="M0.9 1.1 L5.1 5.5 L9.3 1.1" fill="none" stroke="#c8c8c8" stroke-width="2"/></svg>
<div style="position:absolute;left:662px;top:332px;width:25px;height:16px;background:#737386;"></div>
<div style="position:absolute;left:0px;top:349px;width:606px;height:16px;background:#2f2f2f;"></div>
<div style="position:absolute;left:607px;top:349px;width:184px;height:16px;background:#363636;"></div>
<div style="position:absolute;left:0px;top:365px;width:791px;height:1px;background:#111111;"></div>
<div style="position:absolute;left:4px;top:350.5px;width:12.5px;height:12.5px;background:#141414;border-radius:1px;"></div>
<svg style="position:absolute;left:5px;top:352.5px;" width="11" height="9" viewBox="0 0 11 9"><path d="M0.3 4.2 Q5.5 -2.3 10.7 4.2 Q5.5 10.7 0.3 4.2Z" fill="#d4d4d4"/><circle cx="5.7" cy="4.1" r="2.1" fill="#141414"/><circle cx="5.2" cy="3.5" r="0.7" fill="#909090"/></svg>
<div style="position:absolute;left:35px;top:351px;width:11.5px;height:11.5px;background:#111111;border-radius:1.5px;"></div>
<div style="position:absolute;left:49.6px;top:351px;width:12px;height:11.5px;background:#111111;border-radius:1.5px;"></div>
<svg style="position:absolute;left:71.6px;top:353px;" width="8" height="10" viewBox="0 0 8 10"><path d="M1.2 0.8 L5.6 4.8 L1.2 8.8" fill="none" stroke="#a8a8a8" stroke-width="1.8"/></svg>
<div style="position:absolute;left:85px;top:351px;width:12px;height:12px;background:#a9a9cc;"></div>
<div class="t" style="left:106.20px;top:351px;font-size:11.5px;color:#c4c4c4;transform:scaleX(0.9375);transform-origin:0 0;">5</div>
<svg style="position:absolute;left:137px;top:351px;" width="10" height="12" viewBox="0 0 10 12"><path d="M0 0 H7.4 L10 2.6 V12 H0Z" fill="#f6f6f6"/><path d="M7.4 0 V2.6 H10" fill="#cfcfcf"/><rect x="2" y="4" width="6" height="6" fill="#2f5ed0"/><path d="M2 10 L5 6.4 L8 8.6 V10Z" fill="#26c0f2"/></svg>
<div class="t" style="left:154.20px;top:351px;font-size:11.5px;color:#c4c4c4;transform:scaleX(0.9519);transform-origin:0 0;">[Fog 2.png]</div>
<div style="position:absolute;left:266px;top:350px;width:68px;height:14px;background:#121212;border-radius:3px;"></div>
<div class="t" style="left:274.50px;top:351px;font-size:11.5px;color:#c4c4c4;transform:scaleX(0.9717);transform-origin:0 0;">Normal</div>
<svg style="position:absolute;left:316px;top:353.5px;" width="10" height="8" viewBox="0 0 10 8"><path d="M0.9 1.1 L5.1 5.5 L9.3 1.1" fill="none" stroke="#c8c8c8" stroke-width="2"/></svg>
<div style="position:absolute;left:339px;top:351px;width:13px;height:13px;background:#151515;border-radius:2px;"></div>
<svg style="position:absolute;left:355.5px;top:349.5px;" width="14" height="14" viewBox="0 0 14 14"><path d="M5.4 6.8 L5.3 6.6 L5.3 6.3 L5.3 6.0 L5.5 5.8 L5.6 5.5 L5.9 5.3 L6.2 5.1 L6.6 5.0 L7.0 5.0 L7.4 5.1 L7.8 5.3 L8.2 5.5 L8.5 5.9 L8.8 6.3 L8.9 6.9 L8.9 7.4 L8.8 8.0 L8.6 8.5 L8.3 9.0 L7.8 9.4 L7.2 9.8 L6.6 10.0 L5.9 10.1 L5.2 10.0 L4.5 9.7 L3.9 9.4 L3.3 8.8 L2.8 8.1 L2.5 7.4 L2.4 6.6 L2.5 5.7 L2.7 4.8 L3.1 4.0 L3.7 3.3 L4.4 2.7 L5.3 2.3 L6.3 2.1 L7.3 2.1 L8.3 2.3 L9.3 2.7" fill="none" stroke="#8e8e8e" stroke-width="1.3" stroke-linecap="round"/><rect x="12.1" y="2.5" width="1.2" height="2.9" fill="#9a9a9a"/><rect x="9.2" y="9.4" width="2.1" height="2.1" fill="#b0b0b0"/><rect x="11.4" y="7.3" width="2" height="2" fill="#b0b0b0"/></svg>
<div style="position:absolute;left:373px;top:350px;width:68px;height:14px;background:#121212;border-radius:3px;"></div>
<div class="t" style="left:381.50px;top:351px;font-size:11.5px;color:#c4c4c4;transform:scaleX(0.9582);transform-origin:0 0;">No Mat</div>
<svg style="position:absolute;left:423px;top:353.5px;" width="10" height="8" viewBox="0 0 10 8"><path d="M0.9 1.1 L5.1 5.5 L9.3 1.1" fill="none" stroke="#c8c8c8" stroke-width="2"/></svg>
<svg style="position:absolute;left:478.5px;top:350.5px;" width="13" height="13" viewBox="0 0 13 13"><path d="M5.2 6.3 L5.2 6.6 L5.3 6.9 L5.4 7.2 L5.6 7.4 L5.9 7.7 L6.2 7.8 L6.6 7.9 L7.0 7.9 L7.4 7.8 L7.8 7.6 L8.2 7.3 L8.5 7.0 L8.7 6.5 L8.8 6.0 L8.8 5.5 L8.7 5.0 L8.5 4.4 L8.2 4.0 L7.7 3.6 L7.2 3.3 L6.6 3.1 L5.9 3.0 L5.2 3.1 L4.6 3.3 L4.0 3.7 L3.5 4.2 L3.1 4.9 L2.8 5.6 L2.7 6.4 L2.7 7.2 L3.0 8.0 L3.4 8.7 L3.9 9.4 L4.6 9.9 L5.4 10.3 L6.3 10.4 L7.3 10.5 L8.2 10.2 L9.1 9.8 L9.9 9.3 L10.5 8.5 L11.0 7.6 L11.3 6.6 L11.4 5.5 L11.3 4.5 L10.9 3.4 L10.3 2.5 L9.5 1.7" fill="none" stroke="#8e8e8e" stroke-width="1.45" stroke-linecap="round"/></svg>
<div style="position:absolute;left:497px;top:350px;width:89px;height:14px;background:#121212;border-radius:3px;"></div>
<div class="t" style="left:505.60px;top:351px;font-size:11.5px;color:#c4c4c4;transform:scaleX(0.9455);transform-origin:0 0;">None</div>
<svg style="position:absolute;left:568px;top:353.5px;" width="10" height="8" viewBox="0 0 10 8"><path d="M0.9 1.1 L5.1 5.5 L9.3 1.1" fill="none" stroke="#c8c8c8" stroke-width="2"/></svg>
<div style="position:absolute;left:661px;top:349px;width:26px;height:16px;background:#737386;"></div>
<div style="position:absolute;left:0px;top:366px;width:606px;height:16px;background:#2f2f2f;"></div>
<div style="position:absolute;left:607px;top:366px;width:184px;height:16px;background:#363636;"></div>
<div style="position:absolute;left:0px;top:382px;width:791px;height:1px;background:#111111;"></div>
<div style="position:absolute;left:4px;top:367.5px;width:12.5px;height:12.5px;background:#141414;border-radius:1px;"></div>
<svg style="position:absolute;left:5px;top:369.5px;" width="11" height="9" viewBox="0 0 11 9"><path d="M0.3 4.2 Q5.5 -2.3 10.7 4.2 Q5.5 10.7 0.3 4.2Z" fill="#d4d4d4"/><circle cx="5.7" cy="4.1" r="2.1" fill="#141414"/><circle cx="5.2" cy="3.5" r="0.7" fill="#909090"/></svg>
<div style="position:absolute;left:35px;top:368px;width:11.5px;height:11.5px;background:#111111;border-radius:1.5px;"></div>
<div style="position:absolute;left:49.6px;top:368px;width:12px;height:11.5px;background:#111111;border-radius:1.5px;"></div>
<svg style="position:absolute;left:71.6px;top:370px;" width="8" height="10" viewBox="0 0 8 10"><path d="M1.2 0.8 L5.6 4.8 L1.2 8.8" fill="none" stroke="#a8a8a8" stroke-width="1.8"/></svg>
<div style="position:absolute;left:85px;top:368px;width:12px;height:12px;background:#b53838;"></div>
<div class="t" style="left:106.20px;top:368px;font-size:11.5px;color:#c4c4c4;transform:scaleX(0.9375);transform-origin:0 0;">6</div>
<div style="position:absolute;left:135px;top:367px;width:14px;height:14px;background:#ffcc00;box-sizing:border-box;border:1px solid #050505;"></div>
<div class="t" style="left:154.20px;top:368px;font-size:11.5px;color:#c4c4c4;transform:scaleX(0.9749);transform-origin:0 0;">[Yellow Solid 1]</div>
<div style="position:absolute;left:266px;top:367px;width:68px;height:14px;background:#121212;border-radius:3px;"></div>
<div class="t" style="left:274.50px;top:368px;font-size:11.5px;color:#c4c4c4;transform:scaleX(0.9231);transform-origin:0 0;">Soft Lig</div>
<svg style="position:absolute;left:316px;top:370.5px;" width="10" height="8" viewBox="0 0 10 8"><path d="M0.9 1.1 L5.1 5.5 L9.3 1.1" fill="none" stroke="#c8c8c8" stroke-width="2"/></svg>
<div style="position:absolute;left:339px;top:368px;width:13px;height:13px;background:#151515;border-radius:2px;"></div>
<svg style="position:absolute;left:355.5px;top:366.5px;" width="14" height="14" viewBox="0 0 14 14"><path d="M5.4 6.8 L5.3 6.6 L5.3 6.3 L5.3 6.0 L5.5 5.8 L5.6 5.5 L5.9 5.3 L6.2 5.1 L6.6 5.0 L7.0 5.0 L7.4 5.1 L7.8 5.3 L8.2 5.5 L8.5 5.9 L8.8 6.3 L8.9 6.9 L8.9 7.4 L8.8 8.0 L8.6 8.5 L8.3 9.0 L7.8 9.4 L7.2 9.8 L6.6 10.0 L5.9 10.1 L5.2 10.0 L4.5 9.7 L3.9 9.4 L3.3 8.8 L2.8 8.1 L2.5 7.4 L2.4 6.6 L2.5 5.7 L2.7 4.8 L3.1 4.0 L3.7 3.3 L4.4 2.7 L5.3 2.3 L6.3 2.1 L7.3 2.1 L8.3 2.3 L9.3 2.7" fill="none" stroke="#8e8e8e" stroke-width="1.3" stroke-linecap="round"/><rect x="12.1" y="2.5" width="1.2" height="2.9" fill="#9a9a9a"/><rect x="9.2" y="9.4" width="2.1" height="2.1" fill="#b0b0b0"/><rect x="11.4" y="7.3" width="2" height="2" fill="#b0b0b0"/></svg>
<div style="position:absolute;left:373px;top:367px;width:68px;height:14px;background:#121212;border-radius:3px;"></div>
<div class="t" style="left:381.50px;top:368px;font-size:11.5px;color:#c4c4c4;transform:scaleX(0.9582);transform-origin:0 0;">No Mat</div>
<svg style="position:absolute;left:423px;top:370.5px;" width="10" height="8" viewBox="0 0 10 8"><path d="M0.9 1.1 L5.1 5.5 L9.3 1.1" fill="none" stroke="#c8c8c8" stroke-width="2"/></svg>
<svg style="position:absolute;left:478.5px;top:367.5px;" width="13" height="13" viewBox="0 0 13 13"><path d="M5.2 6.3 L5.2 6.6 L5.3 6.9 L5.4 7.2 L5.6 7.4 L5.9 7.7 L6.2 7.8 L6.6 7.9 L7.0 7.9 L7.4 7.8 L7.8 7.6 L8.2 7.3 L8.5 7.0 L8.7 6.5 L8.8 6.0 L8.8 5.5 L8.7 5.0 L8.5 4.4 L8.2 4.0 L7.7 3.6 L7.2 3.3 L6.6 3.1 L5.9 3.0 L5.2 3.1 L4.6 3.3 L4.0 3.7 L3.5 4.2 L3.1 4.9 L2.8 5.6 L2.7 6.4 L2.7 7.2 L3.0 8.0 L3.4 8.7 L3.9 9.4 L4.6 9.9 L5.4 10.3 L6.3 10.4 L7.3 10.5 L8.2 10.2 L9.1 9.8 L9.9 9.3 L10.5 8.5 L11.0 7.6 L11.3 6.6 L11.4 5.5 L11.3 4.5 L10.9 3.4 L10.3 2.5 L9.5 1.7" fill="none" stroke="#8e8e8e" stroke-width="1.45" stroke-linecap="round"/></svg>
<div style="position:absolute;left:497px;top:367px;width:89px;height:14px;background:#121212;border-radius:3px;"></div>
<div class="t" style="left:505.60px;top:368px;font-size:11.5px;color:#c4c4c4;transform:scaleX(0.9455);transform-origin:0 0;">None</div>
<svg style="position:absolute;left:568px;top:370.5px;" width="10" height="8" viewBox="0 0 10 8"><path d="M0.9 1.1 L5.1 5.5 L9.3 1.1" fill="none" stroke="#c8c8c8" stroke-width="2"/></svg>
<div style="position:absolute;left:659px;top:366px;width:6px;height:16px;background:#7a3b3d;"></div>
<div style="position:absolute;left:0px;top:383px;width:606px;height:16px;background:#2f2f2f;"></div>
<div style="position:absolute;left:607px;top:383px;width:184px;height:16px;background:#363636;"></div>
<div style="position:absolute;left:0px;top:399px;width:791px;height:1px;background:#111111;"></div>
<div style="position:absolute;left:4px;top:384.5px;width:12.5px;height:12.5px;background:#141414;border-radius:1px;"></div>
<svg style="position:absolute;left:5px;top:386.5px;" width="11" height="9" viewBox="0 0 11 9"><path d="M0.3 4.2 Q5.5 -2.3 10.7 4.2 Q5.5 10.7 0.3 4.2Z" fill="#d4d4d4"/><circle cx="5.7" cy="4.1" r="2.1" fill="#141414"/><circle cx="5.2" cy="3.5" r="0.7" fill="#909090"/></svg>
<div style="position:absolute;left:35px;top:385px;width:11.5px;height:11.5px;background:#111111;border-radius:1.5px;"></div>
<div style="position:absolute;left:49.6px;top:385px;width:12px;height:11.5px;background:#111111;border-radius:1.5px;"></div>
<svg style="position:absolute;left:71.6px;top:387px;" width="8" height="10" viewBox="0 0 8 10"><path d="M1.2 0.8 L5.6 4.8 L1.2 8.8" fill="none" stroke="#a8a8a8" stroke-width="1.8"/></svg>
<div style="position:absolute;left:85px;top:385px;width:12px;height:12px;background:#b53838;"></div>
<div class="t" style="left:106.20px;top:385px;font-size:11.5px;color:#c4c4c4;transform:scaleX(0.9375);transform-origin:0 0;">7</div>
<svg style="position:absolute;left:137px;top:386px;" width="9" height="10" viewBox="0 0 9 10"><path d="M0.3 0.3 H8.4 V2.8 H7.7 Q7.5 1.4 5.4 1.4 V8.5 L6.6 9.1 V9.6 H2.1 V9.1 L3.3 8.5 V1.4 Q1.2 1.4 1 2.8 H0.3Z" fill="#a0a0a0"/></svg>
<div class="t" style="left:154.20px;top:385px;font-size:11.5px;color:#c4c4c4;transform:scaleX(0.9014);transform-origin:0 0;">LOUIS WALLWORK</div>
<div style="position:absolute;left:266px;top:384px;width:68px;height:14px;background:#121212;border-radius:3px;"></div>
<div class="t" style="left:274.50px;top:385px;font-size:11.5px;color:#c4c4c4;transform:scaleX(0.9717);transform-origin:0 0;">Normal</div>
<svg style="position:absolute;left:316px;top:387.5px;" width="10" height="8" viewBox="0 0 10 8"><path d="M0.9 1.1 L5.1 5.5 L9.3 1.1" fill="none" stroke="#c8c8c8" stroke-width="2"/></svg>
<div style="position:absolute;left:339px;top:385px;width:13px;height:13px;background:#151515;border-radius:2px;"></div>
<svg style="position:absolute;left:355.5px;top:383.5px;" width="14" height="14" viewBox="0 0 14 14"><path d="M5.4 6.8 L5.3 6.6 L5.3 6.3 L5.3 6.0 L5.5 5.8 L5.6 5.5 L5.9 5.3 L6.2 5.1 L6.6 5.0 L7.0 5.0 L7.4 5.1 L7.8 5.3 L8.2 5.5 L8.5 5.9 L8.8 6.3 L8.9 6.9 L8.9 7.4 L8.8 8.0 L8.6 8.5 L8.3 9.0 L7.8 9.4 L7.2 9.8 L6.6 10.0 L5.9 10.1 L5.2 10.0 L4.5 9.7 L3.9 9.4 L3.3 8.8 L2.8 8.1 L2.5 7.4 L2.4 6.6 L2.5 5.7 L2.7 4.8 L3.1 4.0 L3.7 3.3 L4.4 2.7 L5.3 2.3 L6.3 2.1 L7.3 2.1 L8.3 2.3 L9.3 2.7" fill="none" stroke="#8e8e8e" stroke-width="1.3" stroke-linecap="round"/><rect x="12.1" y="2.5" width="1.2" height="2.9" fill="#9a9a9a"/><rect x="9.2" y="9.4" width="2.1" height="2.1" fill="#b0b0b0"/><rect x="11.4" y="7.3" width="2" height="2" fill="#b0b0b0"/></svg>
<div style="position:absolute;left:373px;top:384px;width:68px;height:14px;background:#121212;border-radius:3px;"></div>
<div class="t" style="left:381.50px;top:385px;font-size:11.5px;color:#c4c4c4;transform:scaleX(0.9582);transform-origin:0 0;">No Mat</div>
<svg style="position:absolute;left:423px;top:387.5px;" width="10" height="8" viewBox="0 0 10 8"><path d="M0.9 1.1 L5.1 5.5 L9.3 1.1" fill="none" stroke="#c8c8c8" stroke-width="2"/></svg>
<svg style="position:absolute;left:478.5px;top:384.5px;" width="13" height="13" viewBox="0 0 13 13"><path d="M5.2 6.3 L5.2 6.6 L5.3 6.9 L5.4 7.2 L5.6 7.4 L5.9 7.7 L6.2 7.8 L6.6 7.9 L7.0 7.9 L7.4 7.8 L7.8 7.6 L8.2 7.3 L8.5 7.0 L8.7 6.5 L8.8 6.0 L8.8 5.5 L8.7 5.0 L8.5 4.4 L8.2 4.0 L7.7 3.6 L7.2 3.3 L6.6 3.1 L5.9 3.0 L5.2 3.1 L4.6 3.3 L4.0 3.7 L3.5 4.2 L3.1 4.9 L2.8 5.6 L2.7 6.4 L2.7 7.2 L3.0 8.0 L3.4 8.7 L3.9 9.4 L4.6 9.9 L5.4 10.3 L6.3 10.4 L7.3 10.5 L8.2 10.2 L9.1 9.8 L9.9 9.3 L10.5 8.5 L11.0 7.6 L11.3 6.6 L11.4 5.5 L11.3 4.5 L10.9 3.4 L10.3 2.5 L9.5 1.7" fill="none" stroke="#8e8e8e" stroke-width="1.45" stroke-linecap="round"/></svg>
<div style="position:absolute;left:497px;top:384px;width:89px;height:14px;background:#121212;border-radius:3px;"></div>
<div class="t" style="left:505.60px;top:385px;font-size:11.5px;color:#c4c4c4;transform:scaleX(0.9455);transform-origin:0 0;">None</div>
<svg style="position:absolute;left:568px;top:387.5px;" width="10" height="8" viewBox="0 0 10 8"><path d="M0.9 1.1 L5.1 5.5 L9.3 1.1" fill="none" stroke="#c8c8c8" stroke-width="2"/></svg>
<div style="position:absolute;left:662px;top:383px;width:25px;height:16px;background:#7a3b3d;"></div>
<div style="position:absolute;left:0px;top:400px;width:606px;height:16px;background:#2f2f2f;"></div>
<div style="position:absolute;left:607px;top:400px;width:184px;height:16px;background:#363636;"></div>
<div style="position:absolute;left:0px;top:416px;width:791px;height:1px;background:#111111;"></div>
<div style="position:absolute;left:4px;top:401.5px;width:12.5px;height:12.5px;background:#141414;border-radius:1px;"></div>
<svg style="position:absolute;left:5px;top:403.5px;" width="11" height="9" viewBox="0 0 11 9"><path d="M0.3 4.2 Q5.5 -2.3 10.7 4.2 Q5.5 10.7 0.3 4.2Z" fill="#d4d4d4"/><circle cx="5.7" cy="4.1" r="2.1" fill="#141414"/><circle cx="5.2" cy="3.5" r="0.7" fill="#909090"/></svg>
<div style="position:absolute;left:35px;top:402px;width:11.5px;height:11.5px;background:#111111;border-radius:1.5px;"></div>
<div style="position:absolute;left:49.6px;top:402px;width:12px;height:11.5px;background:#111111;border-radius:1.5px;"></div>
<svg style="position:absolute;left:71.6px;top:404px;" width="8" height="10" viewBox="0 0 8 10"><path d="M1.2 0.8 L5.6 4.8 L1.2 8.8" fill="none" stroke="#a8a8a8" stroke-width="1.8"/></svg>
<div style="position:absolute;left:85px;top:402px;width:12px;height:12px;background:#b53838;"></div>
<div class="t" style="left:106.20px;top:402px;font-size:11.5px;color:#c4c4c4;transform:scaleX(0.9375);transform-origin:0 0;">8</div>
<svg style="position:absolute;left:137px;top:403px;" width="9" height="10" viewBox="0 0 9 10"><path d="M0.3 0.3 H8.4 V2.8 H7.7 Q7.5 1.4 5.4 1.4 V8.5 L6.6 9.1 V9.6 H2.1 V9.1 L3.3 8.5 V1.4 Q1.2 1.4 1 2.8 H0.3Z" fill="#a0a0a0"/></svg>
<div class="t" style="left:154.20px;top:402px;font-size:11.5px;color:#c4c4c4;transform:scaleX(0.8597);transform-origin:0 0;">SHOT BY</div>
<div style="position:absolute;left:266px;top:401px;width:68px;height:14px;background:#121212;border-radius:3px;"></div>
<div class="t" style="left:274.50px;top:402px;font-size:11.5px;color:#c4c4c4;transform:scaleX(0.9717);transform-origin:0 0;">Normal</div>
<svg style="position:absolute;left:316px;top:404.5px;" width="10" height="8" viewBox="0 0 10 8"><path d="M0.9 1.1 L5.1 5.5 L9.3 1.1" fill="none" stroke="#c8c8c8" stroke-width="2"/></svg>
<div style="position:absolute;left:339px;top:402px;width:13px;height:13px;background:#151515;border-radius:2px;"></div>
<svg style="position:absolute;left:355.5px;top:400.5px;" width="14" height="14" viewBox="0 0 14 14"><path d="M5.4 6.8 L5.3 6.6 L5.3 6.3 L5.3 6.0 L5.5 5.8 L5.6 5.5 L5.9 5.3 L6.2 5.1 L6.6 5.0 L7.0 5.0 L7.4 5.1 L7.8 5.3 L8.2 5.5 L8.5 5.9 L8.8 6.3 L8.9 6.9 L8.9 7.4 L8.8 8.0 L8.6 8.5 L8.3 9.0 L7.8 9.4 L7.2 9.8 L6.6 10.0 L5.9 10.1 L5.2 10.0 L4.5 9.7 L3.9 9.4 L3.3 8.8 L2.8 8.1 L2.5 7.4 L2.4 6.6 L2.5 5.7 L2.7 4.8 L3.1 4.0 L3.7 3.3 L4.4 2.7 L5.3 2.3 L6.3 2.1 L7.3 2.1 L8.3 2.3 L9.3 2.7" fill="none" stroke="#8e8e8e" stroke-width="1.3" stroke-linecap="round"/><rect x="12.1" y="2.5" width="1.2" height="2.9" fill="#9a9a9a"/><rect x="9.2" y="9.4" width="2.1" height="2.1" fill="#b0b0b0"/><rect x="11.4" y="7.3" width="2" height="2" fill="#b0b0b0"/></svg>
<div style="position:absolute;left:373px;top:401px;width:68px;height:14px;background:#121212;border-radius:3px;"></div>
<div class="t" style="left:381.50px;top:402px;font-size:11.5px;color:#c4c4c4;transform:scaleX(0.9582);transform-origin:0 0;">No Mat</div>
<svg style="position:absolute;left:423px;top:404.5px;" width="10" height="8" viewBox="0 0 10 8"><path d="M0.9 1.1 L5.1 5.5 L9.3 1.1" fill="none" stroke="#c8c8c8" stroke-width="2"/></svg>
<svg style="position:absolute;left:478.5px;top:401.5px;" width="13" height="13" viewBox="0 0 13 13"><path d="M5.2 6.3 L5.2 6.6 L5.3 6.9 L5.4 7.2 L5.6 7.4 L5.9 7.7 L6.2 7.8 L6.6 7.9 L7.0 7.9 L7.4 7.8 L7.8 7.6 L8.2 7.3 L8.5 7.0 L8.7 6.5 L8.8 6.0 L8.8 5.5 L8.7 5.0 L8.5 4.4 L8.2 4.0 L7.7 3.6 L7.2 3.3 L6.6 3.1 L5.9 3.0 L5.2 3.1 L4.6 3.3 L4.0 3.7 L3.5 4.2 L3.1 4.9 L2.8 5.6 L2.7 6.4 L2.7 7.2 L3.0 8.0 L3.4 8.7 L3.9 9.4 L4.6 9.9 L5.4 10.3 L6.3 10.4 L7.3 10.5 L8.2 10.2 L9.1 9.8 L9.9 9.3 L10.5 8.5 L11.0 7.6 L11.3 6.6 L11.4 5.5 L11.3 4.5 L10.9 3.4 L10.3 2.5 L9.5 1.7" fill="none" stroke="#8e8e8e" stroke-width="1.45" stroke-linecap="round"/></svg>
<div style="position:absolute;left:497px;top:401px;width:89px;height:14px;background:#121212;border-radius:3px;"></div>
<div class="t" style="left:505.60px;top:402px;font-size:11.5px;color:#c4c4c4;transform:scaleX(0.9455);transform-origin:0 0;">None</div>
<svg style="position:absolute;left:568px;top:404.5px;" width="10" height="8" viewBox="0 0 10 8"><path d="M0.9 1.1 L5.1 5.5 L9.3 1.1" fill="none" stroke="#c8c8c8" stroke-width="2"/></svg>
<div style="position:absolute;left:662px;top:400px;width:25px;height:16px;background:#7a3b3d;"></div>
<div style="position:absolute;left:0px;top:417px;width:606px;height:16px;background:#2f2f2f;"></div>
<div style="position:absolute;left:607px;top:417px;width:184px;height:16px;background:#363636;"></div>
<div style="position:absolute;left:0px;top:433px;width:791px;height:1px;background:#111111;"></div>
<div style="position:absolute;left:4px;top:418.5px;width:12.5px;height:12.5px;background:#141414;border-radius:1px;"></div>
<svg style="position:absolute;left:5px;top:420.5px;" width="11" height="9" viewBox="0 0 11 9"><path d="M0.3 4.2 Q5.5 -2.3 10.7 4.2 Q5.5 10.7 0.3 4.2Z" fill="#d4d4d4"/><circle cx="5.7" cy="4.1" r="2.1" fill="#141414"/><circle cx="5.2" cy="3.5" r="0.7" fill="#909090"/></svg>
<div style="position:absolute;left:35px;top:419px;width:11.5px;height:11.5px;background:#111111;border-radius:1.5px;"></div>
<div style="position:absolute;left:49.6px;top:419px;width:12px;height:11.5px;background:#111111;border-radius:1.5px;"></div>
<svg style="position:absolute;left:71.6px;top:421px;" width="8" height="10" viewBox="0 0 8 10"><path d="M1.2 0.8 L5.6 4.8 L1.2 8.8" fill="none" stroke="#a8a8a8" stroke-width="1.8"/></svg>
<div style="position:absolute;left:85px;top:419px;width:12px;height:12px;background:#b53838;"></div>
<div class="t" style="left:106.20px;top:419px;font-size:11.5px;color:#c4c4c4;transform:scaleX(0.9375);transform-origin:0 0;">9</div>
<div style="position:absolute;left:135px;top:418px;width:14px;height:14px;background:#cdcdcd;box-sizing:border-box;border:1px solid #050505;"></div>
<div class="t" style="left:154.20px;top:419px;font-size:11.5px;color:#c4c4c4;transform:scaleX(0.9499);transform-origin:0 0;">[Light Gray Solid 1]</div>
<div style="position:absolute;left:266px;top:418px;width:68px;height:14px;background:#121212;border-radius:3px;"></div>
<div class="t" style="left:274.50px;top:419px;font-size:11.5px;color:#c4c4c4;transform:scaleX(0.9231);transform-origin:0 0;">Soft Lig</div>
<svg style="position:absolute;left:316px;top:421.5px;" width="10" height="8" viewBox="0 0 10 8"><path d="M0.9 1.1 L5.1 5.5 L9.3 1.1" fill="none" stroke="#c8c8c8" stroke-width="2"/></svg>
<div style="position:absolute;left:339px;top:419px;width:13px;height:13px;background:#151515;border-radius:2px;"></div>
<svg style="position:absolute;left:355.5px;top:417.5px;" width="14" height="14" viewBox="0 0 14 14"><path d="M5.4 6.8 L5.3 6.6 L5.3 6.3 L5.3 6.0 L5.5 5.8 L5.6 5.5 L5.9 5.3 L6.2 5.1 L6.6 5.0 L7.0 5.0 L7.4 5.1 L7.8 5.3 L8.2 5.5 L8.5 5.9 L8.8 6.3 L8.9 6.9 L8.9 7.4 L8.8 8.0 L8.6 8.5 L8.3 9.0 L7.8 9.4 L7.2 9.8 L6.6 10.0 L5.9 10.1 L5.2 10.0 L4.5 9.7 L3.9 9.4 L3.3 8.8 L2.8 8.1 L2.5 7.4 L2.4 6.6 L2.5 5.7 L2.7 4.8 L3.1 4.0 L3.7 3.3 L4.4 2.7 L5.3 2.3 L6.3 2.1 L7.3 2.1 L8.3 2.3 L9.3 2.7" fill="none" stroke="#8e8e8e" stroke-width="1.3" stroke-linecap="round"/><rect x="12.1" y="2.5" width="1.2" height="2.9" fill="#9a9a9a"/><rect x="9.2" y="9.4" width="2.1" height="2.1" fill="#b0b0b0"/><rect x="11.4" y="7.3" width="2" height="2" fill="#b0b0b0"/></svg>
<div style="position:absolute;left:373px;top:418px;width:68px;height:14px;background:#121212;border-radius:3px;"></div>
<div class="t" style="left:381.50px;top:419px;font-size:11.5px;color:#c4c4c4;transform:scaleX(0.9582);transform-origin:0 0;">No Mat</div>
<svg style="position:absolute;left:423px;top:421.5px;" width="10" height="8" viewBox="0 0 10 8"><path d="M0.9 1.1 L5.1 5.5 L9.3 1.1" fill="none" stroke="#c8c8c8" stroke-width="2"/></svg>
<svg style="position:absolute;left:478.5px;top:418.5px;" width="13" height="13" viewBox="0 0 13 13"><path d="M5.2 6.3 L5.2 6.6 L5.3 6.9 L5.4 7.2 L5.6 7.4 L5.9 7.7 L6.2 7.8 L6.6 7.9 L7.0 7.9 L7.4 7.8 L7.8 7.6 L8.2 7.3 L8.5 7.0 L8.7 6.5 L8.8 6.0 L8.8 5.5 L8.7 5.0 L8.5 4.4 L8.2 4.0 L7.7 3.6 L7.2 3.3 L6.6 3.1 L5.9 3.0 L5.2 3.1 L4.6 3.3 L4.0 3.7 L3.5 4.2 L3.1 4.9 L2.8 5.6 L2.7 6.4 L2.7 7.2 L3.0 8.0 L3.4 8.7 L3.9 9.4 L4.6 9.9 L5.4 10.3 L6.3 10.4 L7.3 10.5 L8.2 10.2 L9.1 9.8 L9.9 9.3 L10.5 8.5 L11.0 7.6 L11.3 6.6 L11.4 5.5 L11.3 4.5 L10.9 3.4 L10.3 2.5 L9.5 1.7" fill="none" stroke="#8e8e8e" stroke-width="1.45" stroke-linecap="round"/></svg>
<div style="position:absolute;left:497px;top:418px;width:89px;height:14px;background:#121212;border-radius:3px;"></div>
<div class="t" style="left:505.60px;top:419px;font-size:11.5px;color:#c4c4c4;transform:scaleX(0.9455);transform-origin:0 0;">None</div>
<svg style="position:absolute;left:568px;top:421.5px;" width="10" height="8" viewBox="0 0 10 8"><path d="M0.9 1.1 L5.1 5.5 L9.3 1.1" fill="none" stroke="#c8c8c8" stroke-width="2"/></svg>
<div style="position:absolute;left:662px;top:417px;width:25px;height:16px;background:#7a3b3d;"></div>
<div style="position:absolute;left:0px;top:434px;width:606px;height:16px;background:#2f2f2f;"></div>
<div style="position:absolute;left:607px;top:434px;width:184px;height:16px;background:#363636;"></div>
<div style="position:absolute;left:615px;top:434px;width:176px;height:16px;background:#4a463e;box-sizing:border-box;border-top:1px solid #6a624f;border-bottom:1px solid #6a624f;"></div>
<div style="position:absolute;left:0px;top:450px;width:791px;height:1px;background:#111111;"></div>
<div style="position:absolute;left:4px;top:435.5px;width:12.5px;height:12.5px;background:#141414;border-radius:1px;"></div>
<svg style="position:absolute;left:5px;top:437.5px;" width="11" height="9" viewBox="0 0 11 9"><path d="M0.3 4.2 Q5.5 -2.3 10.7 4.2 Q5.5 10.7 0.3 4.2Z" fill="#d4d4d4"/><circle cx="5.7" cy="4.1" r="2.1" fill="#141414"/><circle cx="5.2" cy="3.5" r="0.7" fill="#909090"/></svg>
<div style="position:absolute;left:35px;top:436px;width:11.5px;height:11.5px;background:#111111;border-radius:1.5px;"></div>
<div style="position:absolute;left:49.6px;top:436px;width:12px;height:11.5px;background:#111111;border-radius:1.5px;"></div>
<svg style="position:absolute;left:71.6px;top:438px;" width="8" height="10" viewBox="0 0 8 10"><path d="M1.2 0.8 L5.6 4.8 L1.2 8.8" fill="none" stroke="#a8a8a8" stroke-width="1.8"/></svg>
<div style="position:absolute;left:85px;top:436px;width:12px;height:12px;background:#b49f7a;"></div>
<div class="t" style="left:106.20px;top:436px;font-size:11.5px;color:#c4c4c4;transform:scaleX(0.9609);transform-origin:0 0;">10</div>
<svg style="position:absolute;left:134px;top:435px;" width="16" height="13" viewBox="0 0 16 13"><rect x="0" y="0" width="16" height="13" fill="#c2c2c2"/><g fill="#1e1e1e"><rect x="1" y="1.2" width="1.2" height="1.7" rx="0.5"/><rect x="1" y="4.4" width="1.2" height="1.7" rx="0.5"/><rect x="1" y="7.5" width="1.2" height="1.7" rx="0.5"/><rect x="1" y="10.6" width="1.2" height="1.7" rx="0.5"/><rect x="13.8" y="1.2" width="1.2" height="1.7" rx="0.5"/><rect x="13.8" y="4.4" width="1.2" height="1.7" rx="0.5"/><rect x="13.8" y="7.5" width="1.2" height="1.7" rx="0.5"/><rect x="13.8" y="10.6" width="1.2" height="1.7" rx="0.5"/></g><rect x="3" y="1" width="10" height="11" fill="#b6b6b6"/><path d="M4 11 L5 7.5 L8 4.5 L12 4.5 L12 10 L9 11Z" fill="#1c1c1c"/><circle cx="5.9" cy="4.9" r="2.3" fill="#3b95f0" stroke="#1c2f44" stroke-width="0.5"/><path d="M8.2 5.4 L11.4 4.9 L11.2 8.9Z" fill="#f24a2a"/><path d="M5.6 10.2 L7.6 7.4 L9.6 10.2Z" fill="#2ec27e"/></svg>
<div class="t" style="left:154.20px;top:436px;font-size:11.5px;color:#c4c4c4;transform:scaleX(0.9499);transform-origin:0 0;">[Blending Layers]</div>
<div style="position:absolute;left:266px;top:435px;width:68px;height:14px;background:#121212;border-radius:3px;"></div>
<div class="t" style="left:274.50px;top:436px;font-size:11.5px;color:#c4c4c4;transform:scaleX(0.9717);transform-origin:0 0;">Normal</div>
<svg style="position:absolute;left:316px;top:438.5px;" width="10" height="8" viewBox="0 0 10 8"><path d="M0.9 1.1 L5.1 5.5 L9.3 1.1" fill="none" stroke="#c8c8c8" stroke-width="2"/></svg>
<div style="position:absolute;left:339px;top:436px;width:13px;height:13px;background:#151515;border-radius:2px;"></div>
<svg style="position:absolute;left:355.5px;top:434.5px;" width="14" height="14" viewBox="0 0 14 14"><path d="M5.4 6.8 L5.3 6.6 L5.3 6.3 L5.3 6.0 L5.5 5.8 L5.6 5.5 L5.9 5.3 L6.2 5.1 L6.6 5.0 L7.0 5.0 L7.4 5.1 L7.8 5.3 L8.2 5.5 L8.5 5.9 L8.8 6.3 L8.9 6.9 L8.9 7.4 L8.8 8.0 L8.6 8.5 L8.3 9.0 L7.8 9.4 L7.2 9.8 L6.6 10.0 L5.9 10.1 L5.2 10.0 L4.5 9.7 L3.9 9.4 L3.3 8.8 L2.8 8.1 L2.5 7.4 L2.4 6.6 L2.5 5.7 L2.7 4.8 L3.1 4.0 L3.7 3.3 L4.4 2.7 L5.3 2.3 L6.3 2.1 L7.3 2.1 L8.3 2.3 L9.3 2.7" fill="none" stroke="#8e8e8e" stroke-width="1.3" stroke-linecap="round"/><rect x="12.1" y="2.5" width="1.2" height="2.9" fill="#9a9a9a"/><rect x="9.2" y="9.4" width="2.1" height="2.1" fill="#b0b0b0"/><rect x="11.4" y="7.3" width="2" height="2" fill="#b0b0b0"/></svg>
<div style="position:absolute;left:373px;top:435px;width:68px;height:14px;background:#121212;border-radius:3px;"></div>
<div class="t" style="left:381.50px;top:436px;font-size:11.5px;color:#c4c4c4;transform:scaleX(0.9582);transform-origin:0 0;">No Mat</div>
<svg style="position:absolute;left:423px;top:438.5px;" width="10" height="8" viewBox="0 0 10 8"><path d="M0.9 1.1 L5.1 5.5 L9.3 1.1" fill="none" stroke="#c8c8c8" stroke-width="2"/></svg>
<svg style="position:absolute;left:478.5px;top:435.5px;" width="13" height="13" viewBox="0 0 13 13"><path d="M5.2 6.3 L5.2 6.6 L5.3 6.9 L5.4 7.2 L5.6 7.4 L5.9 7.7 L6.2 7.8 L6.6 7.9 L7.0 7.9 L7.4 7.8 L7.8 7.6 L8.2 7.3 L8.5 7.0 L8.7 6.5 L8.8 6.0 L8.8 5.5 L8.7 5.0 L8.5 4.4 L8.2 4.0 L7.7 3.6 L7.2 3.3 L6.6 3.1 L5.9 3.0 L5.2 3.1 L4.6 3.3 L4.0 3.7 L3.5 4.2 L3.1 4.9 L2.8 5.6 L2.7 6.4 L2.7 7.2 L3.0 8.0 L3.4 8.7 L3.9 9.4 L4.6 9.9 L5.4 10.3 L6.3 10.4 L7.3 10.5 L8.2 10.2 L9.1 9.8 L9.9 9.3 L10.5 8.5 L11.0 7.6 L11.3 6.6 L11.4 5.5 L11.3 4.5 L10.9 3.4 L10.3 2.5 L9.5 1.7" fill="none" stroke="#8e8e8e" stroke-width="1.45" stroke-linecap="round"/></svg>
<div style="position:absolute;left:497px;top:435px;width:89px;height:14px;background:#121212;border-radius:3px;"></div>
<div class="t" style="left:505.60px;top:436px;font-size:11.5px;color:#c4c4c4;transform:scaleX(0.9455);transform-origin:0 0;">None</div>
<svg style="position:absolute;left:568px;top:438.5px;" width="10" height="8" viewBox="0 0 10 8"><path d="M0.9 1.1 L5.1 5.5 L9.3 1.1" fill="none" stroke="#c8c8c8" stroke-width="2"/></svg>
<div style="position:absolute;left:662px;top:434px;width:25px;height:16px;background:#6e6553;"></div>
<div style="position:absolute;left:0px;top:451px;width:606px;height:16px;background:#2f2f2f;"></div>
<div style="position:absolute;left:607px;top:451px;width:184px;height:16px;background:#363636;"></div>
<div style="position:absolute;left:0px;top:467px;width:791px;height:1px;background:#111111;"></div>
<div style="position:absolute;left:4px;top:452.5px;width:12.5px;height:12.5px;background:#141414;border-radius:1px;"></div>
<svg style="position:absolute;left:5px;top:454.5px;" width="11" height="9" viewBox="0 0 11 9"><path d="M0.3 4.2 Q5.5 -2.3 10.7 4.2 Q5.5 10.7 0.3 4.2Z" fill="#d4d4d4"/><circle cx="5.7" cy="4.1" r="2.1" fill="#141414"/><circle cx="5.2" cy="3.5" r="0.7" fill="#909090"/></svg>
<div style="position:absolute;left:35px;top:453px;width:11.5px;height:11.5px;background:#111111;border-radius:1.5px;"></div>
<div style="position:absolute;left:49.6px;top:453px;width:12px;height:11.5px;background:#111111;border-radius:1.5px;"></div>
<svg style="position:absolute;left:71.6px;top:455px;" width="8" height="10" viewBox="0 0 8 10"><path d="M1.2 0.8 L5.6 4.8 L1.2 8.8" fill="none" stroke="#a8a8a8" stroke-width="1.8"/></svg>
<div style="position:absolute;left:85px;top:453px;width:12px;height:12px;background:#b53838;"></div>
<div class="t" style="left:106.20px;top:453px;font-size:11.5px;color:#c4c4c4;transform:scaleX(1.0293);transform-origin:0 0;">11</div>
<div style="position:absolute;left:135px;top:452px;width:14px;height:14px;background:#cdcdcd;box-sizing:border-box;border:1px solid #050505;"></div>
<div class="t" style="left:154.20px;top:453px;font-size:11.5px;color:#c4c4c4;transform:scaleX(0.9499);transform-origin:0 0;">[Light Gray Solid 1]</div>
<div style="position:absolute;left:266px;top:452px;width:68px;height:14px;background:#121212;border-radius:3px;"></div>
<div class="t" style="left:274.50px;top:453px;font-size:11.5px;color:#c4c4c4;transform:scaleX(0.9717);transform-origin:0 0;">Normal</div>
<svg style="position:absolute;left:316px;top:455.5px;" width="10" height="8" viewBox="0 0 10 8"><path d="M0.9 1.1 L5.1 5.5 L9.3 1.1" fill="none" stroke="#c8c8c8" stroke-width="2"/></svg>
<div style="position:absolute;left:339px;top:453px;width:13px;height:13px;background:#151515;border-radius:2px;"></div>
<svg style="position:absolute;left:355.5px;top:451.5px;" width="14" height="14" viewBox="0 0 14 14"><path d="M5.4 6.8 L5.3 6.6 L5.3 6.3 L5.3 6.0 L5.5 5.8 L5.6 5.5 L5.9 5.3 L6.2 5.1 L6.6 5.0 L7.0 5.0 L7.4 5.1 L7.8 5.3 L8.2 5.5 L8.5 5.9 L8.8 6.3 L8.9 6.9 L8.9 7.4 L8.8 8.0 L8.6 8.5 L8.3 9.0 L7.8 9.4 L7.2 9.8 L6.6 10.0 L5.9 10.1 L5.2 10.0 L4.5 9.7 L3.9 9.4 L3.3 8.8 L2.8 8.1 L2.5 7.4 L2.4 6.6 L2.5 5.7 L2.7 4.8 L3.1 4.0 L3.7 3.3 L4.4 2.7 L5.3 2.3 L6.3 2.1 L7.3 2.1 L8.3 2.3 L9.3 2.7" fill="none" stroke="#8e8e8e" stroke-width="1.3" stroke-linecap="round"/><rect x="12.1" y="2.5" width="1.2" height="2.9" fill="#9a9a9a"/><rect x="9.2" y="9.4" width="2.1" height="2.1" fill="#b0b0b0"/><rect x="11.4" y="7.3" width="2" height="2" fill="#b0b0b0"/></svg>
<div style="position:absolute;left:373px;top:452px;width:68px;height:14px;background:#121212;border-radius:3px;"></div>
<div class="t" style="left:381.50px;top:453px;font-size:11.5px;color:#c4c4c4;transform:scaleX(0.9582);transform-origin:0 0;">No Mat</div>
<svg style="position:absolute;left:423px;top:455.5px;" width="10" height="8" viewBox="0 0 10 8"><path d="M0.9 1.1 L5.1 5.5 L9.3 1.1" fill="none" stroke="#c8c8c8" stroke-width="2"/></svg>
<svg style="position:absolute;left:478.5px;top:452.5px;" width="13" height="13" viewBox="0 0 13 13"><path d="M5.2 6.3 L5.2 6.6 L5.3 6.9 L5.4 7.2 L5.6 7.4 L5.9 7.7 L6.2 7.8 L6.6 7.9 L7.0 7.9 L7.4 7.8 L7.8 7.6 L8.2 7.3 L8.5 7.0 L8.7 6.5 L8.8 6.0 L8.8 5.5 L8.7 5.0 L8.5 4.4 L8.2 4.0 L7.7 3.6 L7.2 3.3 L6.6 3.1 L5.9 3.0 L5.2 3.1 L4.6 3.3 L4.0 3.7 L3.5 4.2 L3.1 4.9 L2.8 5.6 L2.7 6.4 L2.7 7.2 L3.0 8.0 L3.4 8.7 L3.9 9.4 L4.6 9.9 L5.4 10.3 L6.3 10.4 L7.3 10.5 L8.2 10.2 L9.1 9.8 L9.9 9.3 L10.5 8.5 L11.0 7.6 L11.3 6.6 L11.4 5.5 L11.3 4.5 L10.9 3.4 L10.3 2.5 L9.5 1.7" fill="none" stroke="#8e8e8e" stroke-width="1.45" stroke-linecap="round"/></svg>
<div style="position:absolute;left:497px;top:452px;width:89px;height:14px;background:#121212;border-radius:3px;"></div>
<div class="t" style="left:505.60px;top:453px;font-size:11.5px;color:#c4c4c4;transform:scaleX(0.9455);transform-origin:0 0;">None</div>
<svg style="position:absolute;left:568px;top:455.5px;" width="10" height="8" viewBox="0 0 10 8"><path d="M0.9 1.1 L5.1 5.5 L9.3 1.1" fill="none" stroke="#c8c8c8" stroke-width="2"/></svg>
<div style="position:absolute;left:662px;top:451px;width:25px;height:16px;background:#7a3b3d;"></div>
<div style="position:absolute;left:0px;top:468px;width:606px;height:16px;background:#2f2f2f;"></div>
<div style="position:absolute;left:607px;top:468px;width:184px;height:16px;background:#363636;"></div>
<div style="position:absolute;left:0px;top:484px;width:791px;height:1px;background:#111111;"></div>
<div style="position:absolute;left:4px;top:469.5px;width:12.5px;height:12.5px;background:#141414;border-radius:1px;"></div>
<svg style="position:absolute;left:5px;top:471.5px;" width="11" height="9" viewBox="0 0 11 9"><path d="M0.3 4.2 Q5.5 -2.3 10.7 4.2 Q5.5 10.7 0.3 4.2Z" fill="#d4d4d4"/><circle cx="5.7" cy="4.1" r="2.1" fill="#141414"/><circle cx="5.2" cy="3.5" r="0.7" fill="#909090"/></svg>
<div style="position:absolute;left:35px;top:470px;width:11.5px;height:11.5px;background:#111111;border-radius:1.5px;"></div>
<div style="position:absolute;left:49.6px;top:470px;width:12px;height:11.5px;background:#111111;border-radius:1.5px;"></div>
<svg style="position:absolute;left:71.6px;top:472px;" width="8" height="10" viewBox="0 0 8 10"><path d="M1.2 0.8 L5.6 4.8 L1.2 8.8" fill="none" stroke="#a8a8a8" stroke-width="1.8"/></svg>
<div style="position:absolute;left:85px;top:470px;width:12px;height:12px;background:#a9a9cc;"></div>
<div class="t" style="left:106.20px;top:470px;font-size:11.5px;color:#c4c4c4;transform:scaleX(0.9609);transform-origin:0 0;">12</div>
<svg style="position:absolute;left:137px;top:470px;" width="10" height="12" viewBox="0 0 10 12"><path d="M0 0 H7.4 L10 2.6 V12 H0Z" fill="#f6f6f6"/><path d="M7.4 0 V2.6 H10" fill="#cfcfcf"/><rect x="2" y="4" width="6" height="6" fill="#2f5ed0"/><path d="M2 10 L5 6.4 L8 8.6 V10Z" fill="#26c0f2"/></svg>
<div class="t" style="left:154.20px;top:470px;font-size:11.5px;color:#c4c4c4;transform:scaleX(0.9519);transform-origin:0 0;">[Fog 2.png]</div>
<div style="position:absolute;left:266px;top:469px;width:68px;height:14px;background:#121212;border-radius:3px;"></div>
<div class="t" style="left:274.50px;top:470px;font-size:11.5px;color:#c4c4c4;transform:scaleX(0.9717);transform-origin:0 0;">Normal</div>
<svg style="position:absolute;left:316px;top:472.5px;" width="10" height="8" viewBox="0 0 10 8"><path d="M0.9 1.1 L5.1 5.5 L9.3 1.1" fill="none" stroke="#c8c8c8" stroke-width="2"/></svg>
<div style="position:absolute;left:339px;top:470px;width:13px;height:13px;background:#151515;border-radius:2px;"></div>
<svg style="position:absolute;left:355.5px;top:468.5px;" width="14" height="14" viewBox="0 0 14 14"><path d="M5.4 6.8 L5.3 6.6 L5.3 6.3 L5.3 6.0 L5.5 5.8 L5.6 5.5 L5.9 5.3 L6.2 5.1 L6.6 5.0 L7.0 5.0 L7.4 5.1 L7.8 5.3 L8.2 5.5 L8.5 5.9 L8.8 6.3 L8.9 6.9 L8.9 7.4 L8.8 8.0 L8.6 8.5 L8.3 9.0 L7.8 9.4 L7.2 9.8 L6.6 10.0 L5.9 10.1 L5.2 10.0 L4.5 9.7 L3.9 9.4 L3.3 8.8 L2.8 8.1 L2.5 7.4 L2.4 6.6 L2.5 5.7 L2.7 4.8 L3.1 4.0 L3.7 3.3 L4.4 2.7 L5.3 2.3 L6.3 2.1 L7.3 2.1 L8.3 2.3 L9.3 2.7" fill="none" stroke="#8e8e8e" stroke-width="1.3" stroke-linecap="round"/><rect x="12.1" y="2.5" width="1.2" height="2.9" fill="#9a9a9a"/><rect x="9.2" y="9.4" width="2.1" height="2.1" fill="#b0b0b0"/><rect x="11.4" y="7.3" width="2" height="2" fill="#b0b0b0"/></svg>
<div style="position:absolute;left:373px;top:469px;width:68px;height:14px;background:#121212;border-radius:3px;"></div>
<div class="t" style="left:381.50px;top:470px;font-size:11.5px;color:#c4c4c4;transform:scaleX(0.9582);transform-origin:0 0;">No Mat</div>
<svg style="position:absolute;left:423px;top:472.5px;" width="10" height="8" viewBox="0 0 10 8"><path d="M0.9 1.1 L5.1 5.5 L9.3 1.1" fill="none" stroke="#c8c8c8" stroke-width="2"/></svg>
<svg style="position:absolute;left:478.5px;top:469.5px;" width="13" height="13" viewBox="0 0 13 13"><path d="M5.2 6.3 L5.2 6.6 L5.3 6.9 L5.4 7.2 L5.6 7.4 L5.9 7.7 L6.2 7.8 L6.6 7.9 L7.0 7.9 L7.4 7.8 L7.8 7.6 L8.2 7.3 L8.5 7.0 L8.7 6.5 L8.8 6.0 L8.8 5.5 L8.7 5.0 L8.5 4.4 L8.2 4.0 L7.7 3.6 L7.2 3.3 L6.6 3.1 L5.9 3.0 L5.2 3.1 L4.6 3.3 L4.0 3.7 L3.5 4.2 L3.1 4.9 L2.8 5.6 L2.7 6.4 L2.7 7.2 L3.0 8.0 L3.4 8.7 L3.9 9.4 L4.6 9.9 L5.4 10.3 L6.3 10.4 L7.3 10.5 L8.2 10.2 L9.1 9.8 L9.9 9.3 L10.5 8.5 L11.0 7.6 L11.3 6.6 L11.4 5.5 L11.3 4.5 L10.9 3.4 L10.3 2.5 L9.5 1.7" fill="none" stroke="#8e8e8e" stroke-width="1.45" stroke-linecap="round"/></svg>
<div style="position:absolute;left:497px;top:469px;width:89px;height:14px;background:#121212;border-radius:3px;"></div>
<div class="t" style="left:505.60px;top:470px;font-size:11.5px;color:#c4c4c4;transform:scaleX(0.9455);transform-origin:0 0;">None</div>
<svg style="position:absolute;left:568px;top:472.5px;" width="10" height="8" viewBox="0 0 10 8"><path d="M0.9 1.1 L5.1 5.5 L9.3 1.1" fill="none" stroke="#c8c8c8" stroke-width="2"/></svg>
<div style="position:absolute;left:687px;top:468px;width:55px;height:16px;background:#737386;"></div>
<div style="position:absolute;left:0px;top:485px;width:606px;height:16px;background:#2f2f2f;"></div>
<div style="position:absolute;left:607px;top:485px;width:184px;height:16px;background:#363636;"></div>
<div style="position:absolute;left:0px;top:501px;width:791px;height:1px;background:#111111;"></div>
<div style="position:absolute;left:4px;top:486.5px;width:12.5px;height:12.5px;background:#141414;border-radius:1px;"></div>
<svg style="position:absolute;left:5px;top:488.5px;" width="11" height="9" viewBox="0 0 11 9"><path d="M0.3 4.2 Q5.5 -2.3 10.7 4.2 Q5.5 10.7 0.3 4.2Z" fill="#d4d4d4"/><circle cx="5.7" cy="4.1" r="2.1" fill="#141414"/><circle cx="5.2" cy="3.5" r="0.7" fill="#909090"/></svg>
<div style="position:absolute;left:35px;top:487px;width:11.5px;height:11.5px;background:#111111;border-radius:1.5px;"></div>
<div style="position:absolute;left:49.6px;top:487px;width:12px;height:11.5px;background:#111111;border-radius:1.5px;"></div>
<svg style="position:absolute;left:71.6px;top:489px;" width="8" height="10" viewBox="0 0 8 10"><path d="M1.2 0.8 L5.6 4.8 L1.2 8.8" fill="none" stroke="#a8a8a8" stroke-width="1.8"/></svg>
<div style="position:absolute;left:85px;top:487px;width:12px;height:12px;background:#a9a9cc;"></div>
<div class="t" style="left:106.20px;top:487px;font-size:11.5px;color:#c4c4c4;transform:scaleX(0.9609);transform-origin:0 0;">13</div>
<svg style="position:absolute;left:137px;top:487px;" width="10" height="12" viewBox="0 0 10 12"><path d="M0 0 H7.4 L10 2.6 V12 H0Z" fill="#f6f6f6"/><path d="M7.4 0 V2.6 H10" fill="#cfcfcf"/><rect x="2" y="4" width="6" height="6" fill="#2f5ed0"/><path d="M2 10 L5 6.4 L8 8.6 V10Z" fill="#26c0f2"/></svg>
<div class="t" style="left:154.20px;top:487px;font-size:11.5px;color:#c4c4c4;transform:scaleX(0.9497);transform-origin:0 0;">[2.2.png]</div>
<div style="position:absolute;left:266px;top:486px;width:68px;height:14px;background:#121212;border-radius:3px;"></div>
<div class="t" style="left:274.50px;top:487px;font-size:11.5px;color:#c4c4c4;transform:scaleX(0.9536);transform-origin:0 0;">Lighten</div>
<svg style="position:absolute;left:316px;top:489.5px;" width="10" height="8" viewBox="0 0 10 8"><path d="M0.9 1.1 L5.1 5.5 L9.3 1.1" fill="none" stroke="#c8c8c8" stroke-width="2"/></svg>
<div style="position:absolute;left:339px;top:487px;width:13px;height:13px;background:#151515;border-radius:2px;"></div>
<svg style="position:absolute;left:355.5px;top:485.5px;" width="14" height="14" viewBox="0 0 14 14"><path d="M5.4 6.8 L5.3 6.6 L5.3 6.3 L5.3 6.0 L5.5 5.8 L5.6 5.5 L5.9 5.3 L6.2 5.1 L6.6 5.0 L7.0 5.0 L7.4 5.1 L7.8 5.3 L8.2 5.5 L8.5 5.9 L8.8 6.3 L8.9 6.9 L8.9 7.4 L8.8 8.0 L8.6 8.5 L8.3 9.0 L7.8 9.4 L7.2 9.8 L6.6 10.0 L5.9 10.1 L5.2 10.0 L4.5 9.7 L3.9 9.4 L3.3 8.8 L2.8 8.1 L2.5 7.4 L2.4 6.6 L2.5 5.7 L2.7 4.8 L3.1 4.0 L3.7 3.3 L4.4 2.7 L5.3 2.3 L6.3 2.1 L7.3 2.1 L8.3 2.3 L9.3 2.7" fill="none" stroke="#8e8e8e" stroke-width="1.3" stroke-linecap="round"/><rect x="12.1" y="2.5" width="1.2" height="2.9" fill="#9a9a9a"/><rect x="9.2" y="9.4" width="2.1" height="2.1" fill="#b0b0b0"/><rect x="11.4" y="7.3" width="2" height="2" fill="#b0b0b0"/></svg>
<div style="position:absolute;left:373px;top:486px;width:68px;height:14px;background:#121212;border-radius:3px;"></div>
<div class="t" style="left:381.50px;top:487px;font-size:11.5px;color:#c4c4c4;transform:scaleX(0.9582);transform-origin:0 0;">No Mat</div>
<svg style="position:absolute;left:423px;top:489.5px;" width="10" height="8" viewBox="0 0 10 8"><path d="M0.9 1.1 L5.1 5.5 L9.3 1.1" fill="none" stroke="#c8c8c8" stroke-width="2"/></svg>
<svg style="position:absolute;left:478.5px;top:486.5px;" width="13" height="13" viewBox="0 0 13 13"><path d="M5.2 6.3 L5.2 6.6 L5.3 6.9 L5.4 7.2 L5.6 7.4 L5.9 7.7 L6.2 7.8 L6.6 7.9 L7.0 7.9 L7.4 7.8 L7.8 7.6 L8.2 7.3 L8.5 7.0 L8.7 6.5 L8.8 6.0 L8.8 5.5 L8.7 5.0 L8.5 4.4 L8.2 4.0 L7.7 3.6 L7.2 3.3 L6.6 3.1 L5.9 3.0 L5.2 3.1 L4.6 3.3 L4.0 3.7 L3.5 4.2 L3.1 4.9 L2.8 5.6 L2.7 6.4 L2.7 7.2 L3.0 8.0 L3.4 8.7 L3.9 9.4 L4.6 9.9 L5.4 10.3 L6.3 10.4 L7.3 10.5 L8.2 10.2 L9.1 9.8 L9.9 9.3 L10.5 8.5 L11.0 7.6 L11.3 6.6 L11.4 5.5 L11.3 4.5 L10.9 3.4 L10.3 2.5 L9.5 1.7" fill="none" stroke="#8e8e8e" stroke-width="1.45" stroke-linecap="round"/></svg>
<div style="position:absolute;left:497px;top:486px;width:89px;height:14px;background:#121212;border-radius:3px;"></div>
<div class="t" style="left:505.60px;top:487px;font-size:11.5px;color:#c4c4c4;transform:scaleX(0.9455);transform-origin:0 0;">None</div>
<svg style="position:absolute;left:568px;top:489.5px;" width="10" height="8" viewBox="0 0 10 8"><path d="M0.9 1.1 L5.1 5.5 L9.3 1.1" fill="none" stroke="#c8c8c8" stroke-width="2"/></svg>
<div style="position:absolute;left:687px;top:485px;width:55px;height:16px;background:#737386;"></div>
<div style="position:absolute;left:0px;top:502px;width:606px;height:16px;background:#2f2f2f;"></div>
<div style="position:absolute;left:607px;top:502px;width:184px;height:16px;background:#363636;"></div>
<div style="position:absolute;left:0px;top:518px;width:791px;height:1px;background:#111111;"></div>
<div style="position:absolute;left:4px;top:503.5px;width:12.5px;height:12.5px;background:#141414;border-radius:1px;"></div>
<svg style="position:absolute;left:5px;top:505.5px;" width="11" height="9" viewBox="0 0 11 9"><path d="M0.3 4.2 Q5.5 -2.3 10.7 4.2 Q5.5 10.7 0.3 4.2Z" fill="#d4d4d4"/><circle cx="5.7" cy="4.1" r="2.1" fill="#141414"/><circle cx="5.2" cy="3.5" r="0.7" fill="#909090"/></svg>
<div style="position:absolute;left:35px;top:504px;width:11.5px;height:11.5px;background:#111111;border-radius:1.5px;"></div>
<div style="position:absolute;left:49.6px;top:504px;width:12px;height:11.5px;background:#111111;border-radius:1.5px;"></div>
<svg style="position:absolute;left:71.6px;top:506px;" width="8" height="10" viewBox="0 0 8 10"><path d="M1.2 0.8 L5.6 4.8 L1.2 8.8" fill="none" stroke="#a8a8a8" stroke-width="1.8"/></svg>
<div style="position:absolute;left:85px;top:504px;width:12px;height:12px;background:#a9a9cc;"></div>
<div class="t" style="left:106.20px;top:504px;font-size:11.5px;color:#c4c4c4;transform:scaleX(0.9609);transform-origin:0 0;">14</div>
<svg style="position:absolute;left:137px;top:504px;" width="10" height="12" viewBox="0 0 10 12"><path d="M0 0 H7.4 L10 2.6 V12 H0Z" fill="#f6f6f6"/><path d="M7.4 0 V2.6 H10" fill="#cfcfcf"/><rect x="2" y="4" width="6" height="6" fill="#2f5ed0"/><path d="M2 10 L5 6.4 L8 8.6 V10Z" fill="#26c0f2"/></svg>
<div class="t" style="left:154.20px;top:504px;font-size:11.5px;color:#c4c4c4;transform:scaleX(0.9497);transform-origin:0 0;">[2.2.png]</div>
<div style="position:absolute;left:266px;top:503px;width:68px;height:14px;background:#121212;border-radius:3px;"></div>
<div class="t" style="left:274.50px;top:504px;font-size:11.5px;color:#c4c4c4;transform:scaleX(0.9717);transform-origin:0 0;">Normal</div>
<svg style="position:absolute;left:316px;top:506.5px;" width="10" height="8" viewBox="0 0 10 8"><path d="M0.9 1.1 L5.1 5.5 L9.3 1.1" fill="none" stroke="#c8c8c8" stroke-width="2"/></svg>
<div style="position:absolute;left:339px;top:504px;width:13px;height:13px;background:#151515;border-radius:2px;"></div>
<svg style="position:absolute;left:355.5px;top:502.5px;" width="14" height="14" viewBox="0 0 14 14"><path d="M5.4 6.8 L5.3 6.6 L5.3 6.3 L5.3 6.0 L5.5 5.8 L5.6 5.5 L5.9 5.3 L6.2 5.1 L6.6 5.0 L7.0 5.0 L7.4 5.1 L7.8 5.3 L8.2 5.5 L8.5 5.9 L8.8 6.3 L8.9 6.9 L8.9 7.4 L8.8 8.0 L8.6 8.5 L8.3 9.0 L7.8 9.4 L7.2 9.8 L6.6 10.0 L5.9 10.1 L5.2 10.0 L4.5 9.7 L3.9 9.4 L3.3 8.8 L2.8 8.1 L2.5 7.4 L2.4 6.6 L2.5 5.7 L2.7 4.8 L3.1 4.0 L3.7 3.3 L4.4 2.7 L5.3 2.3 L6.3 2.1 L7.3 2.1 L8.3 2.3 L9.3 2.7" fill="none" stroke="#8e8e8e" stroke-width="1.3" stroke-linecap="round"/><rect x="12.1" y="2.5" width="1.2" height="2.9" fill="#9a9a9a"/><rect x="9.2" y="9.4" width="2.1" height="2.1" fill="#b0b0b0"/><rect x="11.4" y="7.3" width="2" height="2" fill="#b0b0b0"/></svg>
<div style="position:absolute;left:373px;top:503px;width:68px;height:14px;background:#121212;border-radius:3px;"></div>
<div class="t" style="left:381.50px;top:504px;font-size:11.5px;color:#c4c4c4;transform:scaleX(0.9582);transform-origin:0 0;">No Mat</div>
<svg style="position:absolute;left:423px;top:506.5px;" width="10" height="8" viewBox="0 0 10 8"><path d="M0.9 1.1 L5.1 5.5 L9.3 1.1" fill="none" stroke="#c8c8c8" stroke-width="2"/></svg>
<svg style="position:absolute;left:478.5px;top:503.5px;" width="13" height="13" viewBox="0 0 13 13"><path d="M5.2 6.3 L5.2 6.6 L5.3 6.9 L5.4 7.2 L5.6 7.4 L5.9 7.7 L6.2 7.8 L6.6 7.9 L7.0 7.9 L7.4 7.8 L7.8 7.6 L8.2 7.3 L8.5 7.0 L8.7 6.5 L8.8 6.0 L8.8 5.5 L8.7 5.0 L8.5 4.4 L8.2 4.0 L7.7 3.6 L7.2 3.3 L6.6 3.1 L5.9 3.0 L5.2 3.1 L4.6 3.3 L4.0 3.7 L3.5 4.2 L3.1 4.9 L2.8 5.6 L2.7 6.4 L2.7 7.2 L3.0 8.0 L3.4 8.7 L3.9 9.4 L4.6 9.9 L5.4 10.3 L6.3 10.4 L7.3 10.5 L8.2 10.2 L9.1 9.8 L9.9 9.3 L10.5 8.5 L11.0 7.6 L11.3 6.6 L11.4 5.5 L11.3 4.5 L10.9 3.4 L10.3 2.5 L9.5 1.7" fill="none" stroke="#8e8e8e" stroke-width="1.45" stroke-linecap="round"/></svg>
<div style="position:absolute;left:497px;top:503px;width:89px;height:14px;background:#121212;border-radius:3px;"></div>
<div class="t" style="left:505.60px;top:504px;font-size:11.5px;color:#c4c4c4;transform:scaleX(0.9455);transform-origin:0 0;">None</div>
<svg style="position:absolute;left:568px;top:506.5px;" width="10" height="8" viewBox="0 0 10 8"><path d="M0.9 1.1 L5.1 5.5 L9.3 1.1" fill="none" stroke="#c8c8c8" stroke-width="2"/></svg>
<div style="position:absolute;left:687px;top:502px;width:55px;height:16px;background:#737386;"></div>
<div style="position:absolute;left:0px;top:519px;width:606px;height:16px;background:#2f2f2f;"></div>
<div style="position:absolute;left:607px;top:519px;width:184px;height:16px;background:#363636;"></div>
<div style="position:absolute;left:0px;top:535px;width:791px;height:1px;background:#111111;"></div>
<div style="position:absolute;left:4px;top:520.5px;width:12.5px;height:12.5px;background:#141414;border-radius:1px;"></div>
<svg style="position:absolute;left:5px;top:522.5px;" width="11" height="9" viewBox="0 0 11 9"><path d="M0.3 4.2 Q5.5 -2.3 10.7 4.2 Q5.5 10.7 0.3 4.2Z" fill="#d4d4d4"/><circle cx="5.7" cy="4.1" r="2.1" fill="#141414"/><circle cx="5.2" cy="3.5" r="0.7" fill="#909090"/></svg>
<div style="position:absolute;left:35px;top:521px;width:11.5px;height:11.5px;background:#111111;border-radius:1.5px;"></div>
<div style="position:absolute;left:49.6px;top:521px;width:12px;height:11.5px;background:#111111;border-radius:1.5px;"></div>
<svg style="position:absolute;left:71.6px;top:523px;" width="8" height="10" viewBox="0 0 8 10"><path d="M1.2 0.8 L5.6 4.8 L1.2 8.8" fill="none" stroke="#a8a8a8" stroke-width="1.8"/></svg>
<div style="position:absolute;left:85px;top:521px;width:12px;height:12px;background:#a9a9cc;"></div>
<div class="t" style="left:106.20px;top:521px;font-size:11.5px;color:#c4c4c4;transform:scaleX(0.9609);transform-origin:0 0;">15</div>
<svg style="position:absolute;left:137px;top:521px;" width="10" height="12" viewBox="0 0 10 12"><path d="M0 0 H7.4 L10 2.6 V12 H0Z" fill="#f6f6f6"/><path d="M7.4 0 V2.6 H10" fill="#cfcfcf"/><rect x="2" y="4" width="6" height="6" fill="#2f5ed0"/><path d="M2 10 L5 6.4 L8 8.6 V10Z" fill="#26c0f2"/></svg>
<div class="t" style="left:154.20px;top:521px;font-size:11.5px;color:#c4c4c4;transform:scaleX(0.9385);transform-origin:0 0;">[2.1.png]</div>
<div style="position:absolute;left:266px;top:520px;width:68px;height:14px;background:#121212;border-radius:3px;"></div>
<div class="t" style="left:274.50px;top:521px;font-size:11.5px;color:#c4c4c4;transform:scaleX(0.9717);transform-origin:0 0;">Normal</div>
<svg style="position:absolute;left:316px;top:523.5px;" width="10" height="8" viewBox="0 0 10 8"><path d="M0.9 1.1 L5.1 5.5 L9.3 1.1" fill="none" stroke="#c8c8c8" stroke-width="2"/></svg>
<div style="position:absolute;left:339px;top:521px;width:13px;height:13px;background:#151515;border-radius:2px;"></div>
<svg style="position:absolute;left:355.5px;top:519.5px;" width="14" height="14" viewBox="0 0 14 14"><path d="M5.4 6.8 L5.3 6.6 L5.3 6.3 L5.3 6.0 L5.5 5.8 L5.6 5.5 L5.9 5.3 L6.2 5.1 L6.6 5.0 L7.0 5.0 L7.4 5.1 L7.8 5.3 L8.2 5.5 L8.5 5.9 L8.8 6.3 L8.9 6.9 L8.9 7.4 L8.8 8.0 L8.6 8.5 L8.3 9.0 L7.8 9.4 L7.2 9.8 L6.6 10.0 L5.9 10.1 L5.2 10.0 L4.5 9.7 L3.9 9.4 L3.3 8.8 L2.8 8.1 L2.5 7.4 L2.4 6.6 L2.5 5.7 L2.7 4.8 L3.1 4.0 L3.7 3.3 L4.4 2.7 L5.3 2.3 L6.3 2.1 L7.3 2.1 L8.3 2.3 L9.3 2.7" fill="none" stroke="#8e8e8e" stroke-width="1.3" stroke-linecap="round"/><rect x="12.1" y="2.5" width="1.2" height="2.9" fill="#9a9a9a"/><rect x="9.2" y="9.4" width="2.1" height="2.1" fill="#b0b0b0"/><rect x="11.4" y="7.3" width="2" height="2" fill="#b0b0b0"/></svg>
<div style="position:absolute;left:373px;top:520px;width:68px;height:14px;background:#121212;border-radius:3px;"></div>
<div class="t" style="left:381.50px;top:521px;font-size:11.5px;color:#c4c4c4;transform:scaleX(0.9582);transform-origin:0 0;">No Mat</div>
<svg style="position:absolute;left:423px;top:523.5px;" width="10" height="8" viewBox="0 0 10 8"><path d="M0.9 1.1 L5.1 5.5 L9.3 1.1" fill="none" stroke="#c8c8c8" stroke-width="2"/></svg>
<svg style="position:absolute;left:478.5px;top:520.5px;" width="13" height="13" viewBox="0 0 13 13"><path d="M5.2 6.3 L5.2 6.6 L5.3 6.9 L5.4 7.2 L5.6 7.4 L5.9 7.7 L6.2 7.8 L6.6 7.9 L7.0 7.9 L7.4 7.8 L7.8 7.6 L8.2 7.3 L8.5 7.0 L8.7 6.5 L8.8 6.0 L8.8 5.5 L8.7 5.0 L8.5 4.4 L8.2 4.0 L7.7 3.6 L7.2 3.3 L6.6 3.1 L5.9 3.0 L5.2 3.1 L4.6 3.3 L4.0 3.7 L3.5 4.2 L3.1 4.9 L2.8 5.6 L2.7 6.4 L2.7 7.2 L3.0 8.0 L3.4 8.7 L3.9 9.4 L4.6 9.9 L5.4 10.3 L6.3 10.4 L7.3 10.5 L8.2 10.2 L9.1 9.8 L9.9 9.3 L10.5 8.5 L11.0 7.6 L11.3 6.6 L11.4 5.5 L11.3 4.5 L10.9 3.4 L10.3 2.5 L9.5 1.7" fill="none" stroke="#8e8e8e" stroke-width="1.45" stroke-linecap="round"/></svg>
<div style="position:absolute;left:497px;top:520px;width:89px;height:14px;background:#121212;border-radius:3px;"></div>
<div class="t" style="left:505.60px;top:521px;font-size:11.5px;color:#c4c4c4;transform:scaleX(0.9455);transform-origin:0 0;">None</div>
<svg style="position:absolute;left:568px;top:523.5px;" width="10" height="8" viewBox="0 0 10 8"><path d="M0.9 1.1 L5.1 5.5 L9.3 1.1" fill="none" stroke="#c8c8c8" stroke-width="2"/></svg>
<div style="position:absolute;left:687px;top:519px;width:55px;height:16px;background:#737386;"></div>
<div style="position:absolute;left:0px;top:536px;width:606px;height:16px;background:#2f2f2f;"></div>
<div style="position:absolute;left:607px;top:536px;width:184px;height:16px;background:#363636;"></div>
<div style="position:absolute;left:0px;top:552px;width:791px;height:1px;background:#111111;"></div>
<div style="position:absolute;left:4px;top:537.5px;width:12.5px;height:12.5px;background:#141414;border-radius:1px;"></div>
<svg style="position:absolute;left:5px;top:539.5px;" width="11" height="9" viewBox="0 0 11 9"><path d="M0.3 4.2 Q5.5 -2.3 10.7 4.2 Q5.5 10.7 0.3 4.2Z" fill="#d4d4d4"/><circle cx="5.7" cy="4.1" r="2.1" fill="#141414"/><circle cx="5.2" cy="3.5" r="0.7" fill="#909090"/></svg>
<div style="position:absolute;left:35px;top:538px;width:11.5px;height:11.5px;background:#111111;border-radius:1.5px;"></div>
<div style="position:absolute;left:49.6px;top:538px;width:12px;height:11.5px;background:#111111;border-radius:1.5px;"></div>
<svg style="position:absolute;left:71.6px;top:540px;" width="8" height="10" viewBox="0 0 8 10"><path d="M1.2 0.8 L5.6 4.8 L1.2 8.8" fill="none" stroke="#a8a8a8" stroke-width="1.8"/></svg>
<div style="position:absolute;left:85px;top:538px;width:12px;height:12px;background:#b53838;"></div>
<div class="t" style="left:106.20px;top:538px;font-size:11.5px;color:#c4c4c4;transform:scaleX(0.9609);transform-origin:0 0;">16</div>
<svg style="position:absolute;left:137px;top:539px;" width="9" height="10" viewBox="0 0 9 10"><path d="M0.3 0.3 H8.4 V2.8 H7.7 Q7.5 1.4 5.4 1.4 V8.5 L6.6 9.1 V9.6 H2.1 V9.1 L3.3 8.5 V1.4 Q1.2 1.4 1 2.8 H0.3Z" fill="#a0a0a0"/></svg>
<div class="t" style="left:154.20px;top:538px;font-size:11.5px;color:#c4c4c4;transform:scaleX(0.8983);transform-origin:0 0;">LOUIS WALLWORK 2</div>
<div style="position:absolute;left:266px;top:537px;width:68px;height:14px;background:#121212;border-radius:3px;"></div>
<div class="t" style="left:274.50px;top:538px;font-size:11.5px;color:#c4c4c4;transform:scaleX(0.9717);transform-origin:0 0;">Normal</div>
<svg style="position:absolute;left:316px;top:540.5px;" width="10" height="8" viewBox="0 0 10 8"><path d="M0.9 1.1 L5.1 5.5 L9.3 1.1" fill="none" stroke="#c8c8c8" stroke-width="2"/></svg>
<div style="position:absolute;left:339px;top:538px;width:13px;height:13px;background:#151515;border-radius:2px;"></div>
<svg style="position:absolute;left:355.5px;top:536.5px;" width="14" height="14" viewBox="0 0 14 14"><path d="M5.4 6.8 L5.3 6.6 L5.3 6.3 L5.3 6.0 L5.5 5.8 L5.6 5.5 L5.9 5.3 L6.2 5.1 L6.6 5.0 L7.0 5.0 L7.4 5.1 L7.8 5.3 L8.2 5.5 L8.5 5.9 L8.8 6.3 L8.9 6.9 L8.9 7.4 L8.8 8.0 L8.6 8.5 L8.3 9.0 L7.8 9.4 L7.2 9.8 L6.6 10.0 L5.9 10.1 L5.2 10.0 L4.5 9.7 L3.9 9.4 L3.3 8.8 L2.8 8.1 L2.5 7.4 L2.4 6.6 L2.5 5.7 L2.7 4.8 L3.1 4.0 L3.7 3.3 L4.4 2.7 L5.3 2.3 L6.3 2.1 L7.3 2.1 L8.3 2.3 L9.3 2.7" fill="none" stroke="#8e8e8e" stroke-width="1.3" stroke-linecap="round"/><rect x="12.1" y="2.5" width="1.2" height="2.9" fill="#9a9a9a"/><rect x="9.2" y="9.4" width="2.1" height="2.1" fill="#b0b0b0"/><rect x="11.4" y="7.3" width="2" height="2" fill="#b0b0b0"/></svg>
<div style="position:absolute;left:373px;top:537px;width:68px;height:14px;background:#121212;border-radius:3px;"></div>
<div class="t" style="left:381.50px;top:538px;font-size:11.5px;color:#c4c4c4;transform:scaleX(0.9582);transform-origin:0 0;">No Mat</div>
<svg style="position:absolute;left:423px;top:540.5px;" width="10" height="8" viewBox="0 0 10 8"><path d="M0.9 1.1 L5.1 5.5 L9.3 1.1" fill="none" stroke="#c8c8c8" stroke-width="2"/></svg>
<svg style="position:absolute;left:478.5px;top:537.5px;" width="13" height="13" viewBox="0 0 13 13"><path d="M5.2 6.3 L5.2 6.6 L5.3 6.9 L5.4 7.2 L5.6 7.4 L5.9 7.7 L6.2 7.8 L6.6 7.9 L7.0 7.9 L7.4 7.8 L7.8 7.6 L8.2 7.3 L8.5 7.0 L8.7 6.5 L8.8 6.0 L8.8 5.5 L8.7 5.0 L8.5 4.4 L8.2 4.0 L7.7 3.6 L7.2 3.3 L6.6 3.1 L5.9 3.0 L5.2 3.1 L4.6 3.3 L4.0 3.7 L3.5 4.2 L3.1 4.9 L2.8 5.6 L2.7 6.4 L2.7 7.2 L3.0 8.0 L3.4 8.7 L3.9 9.4 L4.6 9.9 L5.4 10.3 L6.3 10.4 L7.3 10.5 L8.2 10.2 L9.1 9.8 L9.9 9.3 L10.5 8.5 L11.0 7.6 L11.3 6.6 L11.4 5.5 L11.3 4.5 L10.9 3.4 L10.3 2.5 L9.5 1.7" fill="none" stroke="#8e8e8e" stroke-width="1.45" stroke-linecap="round"/></svg>
<div style="position:absolute;left:497px;top:537px;width:89px;height:14px;background:#121212;border-radius:3px;"></div>
<div class="t" style="left:505.60px;top:538px;font-size:11.5px;color:#c4c4c4;transform:scaleX(0.9455);transform-origin:0 0;">None</div>
<svg style="position:absolute;left:568px;top:540.5px;" width="10" height="8" viewBox="0 0 10 8"><path d="M0.9 1.1 L5.1 5.5 L9.3 1.1" fill="none" stroke="#c8c8c8" stroke-width="2"/></svg>
<div style="position:absolute;left:687px;top:536px;width:55px;height:16px;background:#7a3b3d;"></div>
<div style="position:absolute;left:606px;top:46px;width:1px;height:504px;background:#0c0c0c;"></div>

<div style="position:absolute;left:0;top:0;width:791px;height:46px;background:#1e1e1e;"></div>
<svg style="position:absolute;left:10px;top:0px;" width="6" height="3" viewBox="0 0 6 3"><path d="M0.5 -2.5 L5.5 2.5 M5.5 -2.5 L0.5 2.5" stroke="#777" stroke-width="1.3"/></svg>
<div style="position:absolute;left:25px;top:0px;width:10px;height:3px;background:#b59f7c;"></div>
<div class="t" style="left:46.50px;top:-7px;font-size:12px;color:#e6e6e6;transform:scaleX(1.0183);transform-origin:0 0;">1. Unintro</div>
<div style="position:absolute;left:110px;top:2px;width:8px;height:1px;background:#9a9a9a;"></div>
<div style="position:absolute;left:155px;top:0px;width:10px;height:3px;background:#b59f7c;"></div>
<div class="t" style="left:176.00px;top:-7px;font-size:12px;color:#a0a0a0;transform:scaleX(0.8948);transform-origin:0 0;">Blending Layers</div>
<div style="position:absolute;left:10px;top:9px;width:108px;height:1px;background:#dcdcdc;"></div>
<div style="position:absolute;left:10px;top:10px;width:108px;height:1px;background:#6a6a6a;"></div>
<div class="t" style="left:15.00px;top:17px;font-size:15px;color:#5aa7f7;font-weight:bold;transform:scaleX(0.9809);transform-origin:0 0;">0:00:00:00</div>
<div class="t" style="left:10.30px;top:32px;font-size:10px;color:#3282dc;transform:scaleX(0.9827);transform-origin:0 0;">00000 (23.976 fps)</div>
<div style="position:absolute;left:103px;top:18px;width:366px;height:20px;background:#0e0e0e;box-sizing:border-box;border:1px solid #2c2c2c;border-radius:4px;"></div>
<svg style="position:absolute;left:109px;top:21px;" width="19" height="14" viewBox="0 0 19 14"><circle cx="5.7" cy="5.9" r="3.9" fill="none" stroke="#c0c0c0" stroke-width="1.3"/><path d="M8.6 8.8 L11.5 11.7" stroke="#c0c0c0" stroke-width="1.4"/><path d="M11.4 7.2 L14 9.6 L16.8 6.9" fill="none" stroke="#c0c0c0" stroke-width="1.2"/></svg>
<svg style="position:absolute;left:480px;top:23px;" width="19" height="14" viewBox="0 0 19 14"><g fill="#c4c4c4"><rect x="0.9" y="2" width="2.2" height="1.1"/><rect x="2.8" y="1.1" width="4.4" height="2.8" rx="1"/><rect x="7.2" y="1.9" width="5.3" height="0.9"/><rect x="9" y="2.3" width="1.2" height="5.4"/><rect x="9" y="6.8" width="3.5" height="1.1"/><rect x="12.3" y="0.9" width="3.8" height="3" rx="0.6"/><rect x="12.3" y="6.2" width="3.8" height="2.7" rx="0.6"/><path d="M13.9 10.4 H18 L16 12.8Z"/></g></svg>
<svg style="position:absolute;left:505px;top:22px;" width="17" height="14" viewBox="0 0 17 14"><rect x="0" y="7.8" width="16" height="5.1" fill="#424242"/><path d="M0.8 6.8 Q0.8 4.6 2 4.6 L3.9 4.8 Q4.5 0.8 8 0.8 Q11.5 0.8 12.1 4.8 L14 4.6 Q15.2 4.6 15.2 6.8 Z" fill="#c4c4c4"/><circle cx="6.2" cy="4.3" r="1" fill="#1e1e1e"/><circle cx="9.9" cy="4.3" r="1" fill="#1e1e1e"/><rect x="6.4" y="6" width="3.1" height="6" rx="1.5" fill="#c4c4c4"/></svg>
<svg style="position:absolute;left:529px;top:21px;" width="16" height="16" viewBox="0 0 16 16"><path d="M0.8 3.8 H3.8 V12 H11 V14.9 H0.8 Z" fill="#c4c4c4"/><g fill="#2a2a2a"><circle cx="2.4" cy="5.4" r="0.6"/><circle cx="2.4" cy="7.3" r="0.6"/><circle cx="2.4" cy="9.4" r="0.6"/><circle cx="2.4" cy="11.4" r="0.6"/><circle cx="2.4" cy="13.3" r="0.6"/></g><rect x="4.9" y="0.8" width="10.2" height="11.1" fill="#c4c4c4" stroke="#1e1e1e" stroke-width="0.6"/><g fill="#2a2a2a"><circle cx="6.5" cy="2.4" r="0.6"/><circle cx="6.5" cy="4.4" r="0.6"/><circle cx="6.5" cy="6.5" r="0.6"/><circle cx="6.5" cy="8.5" r="0.6"/><circle cx="6.5" cy="10.4" r="0.6"/><circle cx="13.5" cy="2.4" r="0.6"/><circle cx="13.5" cy="4.4" r="0.6"/><circle cx="13.5" cy="6.5" r="0.6"/><circle cx="13.5" cy="8.5" r="0.6"/><circle cx="13.5" cy="10.4" r="0.6"/></g><rect x="8.2" y="6.1" width="3.5" height="0.8" fill="#222"/></svg>
<svg style="position:absolute;left:551px;top:19px;" width="20" height="20" viewBox="0 0 20 20"><rect x="1.5" y="6.5" width="16.2" height="8" rx="4" transform="rotate(-45 9.6 10.5)" fill="none" stroke="#c4c4c4" stroke-width="1.2"/><path d="M7.0 9.5 A4 4 0 0 0 12.6 15.1" transform="translate(-3.2 -1.2)" fill="none" stroke="#c4c4c4" stroke-width="1.1"/><path d="M7.0 9.5 A4 4 0 0 0 12.6 15.1" transform="translate(-1.4 -2.9)" fill="none" stroke="#c4c4c4" stroke-width="1.1"/><circle cx="12.4" cy="7.7" r="3.9" fill="#444" stroke="#c4c4c4" stroke-width="1.2"/></svg>
<svg style="position:absolute;left:576px;top:20px;" width="18" height="17" viewBox="0 0 18 17"><rect x="2.4" y="3.4" width="14.4" height="12.6" stroke="#c4c4c4" stroke-width="1.3" fill="#1a1a1a"/><path d="M4.3 2 V3.4 M7.5 0.8 V3.4 M10.4 2 V3.4 M13.4 0.8 V3.4 M0.8 5.6 H2.4 M0.8 9.4 H2.4 M0.8 13.5 H2.4" stroke="#c4c4c4" stroke-width="1.1"/><path d="M4.3 6.5 Q6.5 6.3 8.5 9 Q10.5 12.4 14.1 12.4" fill="none" stroke="#c4c4c4" stroke-width="1.2"/></svg>
<!-- header row -->
<div style="position:absolute;left:0px;top:46px;width:791px;height:1px;background:#0c0c0c;"></div>
<div style="position:absolute;left:0px;top:47px;width:606px;height:18px;background:#1e1e1e;"></div>
<div style="position:absolute;left:0px;top:65px;width:606px;height:1px;background:#0c0c0c;"></div>
<svg style="position:absolute;left:5px;top:52px;" width="12" height="9" viewBox="0 0 12 9"><path d="M0.5 4 Q6 -1.5 11.5 4 Q6 9.5 0.5 4Z" fill="#bababa"/><circle cx="6" cy="4" r="2.1" fill="#1e1e1e"/></svg>
<svg style="position:absolute;left:19px;top:50px;" width="13" height="13" viewBox="0 0 13 13"><path d="M1 4 H3 L6.5 0.5 V12 L3 8.5 H1Z" fill="#bababa"/><path d="M8 3.5 A3.2 3.2 0 0 1 8 9 M8.5 1 A5.5 5.5 0 0 1 8.5 11.5" fill="none" stroke="#bababa" stroke-width="1.2"/></svg>
<svg style="position:absolute;left:37px;top:52px;" width="9" height="9" viewBox="0 0 9 9"><circle cx="4.3" cy="4.4" r="4" fill="#bababa"/></svg>
<svg style="position:absolute;left:50px;top:50px;" width="12" height="12" viewBox="0 0 12 12"><path d="M3 5 V3.5 A3 3 0 0 1 9 3.5 V5" fill="none" stroke="#bababa" stroke-width="1.6"/><rect x="1" y="5" width="10" height="6.5" fill="#bababa"/><rect x="5.3" y="7" width="1.5" height="3" fill="#1e1e1e"/></svg>
<svg style="position:absolute;left:80px;top:50px;" width="14" height="14" viewBox="0 0 14 14"><path d="M1 1 H6.5 L13 7.5 L7.5 13 L1 6.5Z" fill="#bababa" stroke="#bababa" stroke-width="0.8" stroke-linejoin="round"/><circle cx="4" cy="4" r="1.2" fill="#1e1e1e"/></svg>
<svg style="position:absolute;left:444px;top:51px;" width="12" height="11" viewBox="0 0 12 11"><rect x="0" y="0" width="11.5" height="11" fill="#bababa"/><circle cx="5.8" cy="5.5" r="3.4" fill="#1e1e1e"/></svg>
<svg style="position:absolute;left:459px;top:51px;" width="12" height="11" viewBox="0 0 12 11"><path d="M0 0 H12 L0 11Z" fill="#bababa"/><circle cx="6" cy="5.5" r="3.4" fill="#1e1e1e"/><path d="M9.2 3 A3.4 3.4 0 0 1 4 8.4Z" fill="#bababa"/></svg>
<div class="t" style="left:105.00px;top:52px;font-size:9px;color:#c4c4c4;">#</div>
<div class="t" style="left:138.00px;top:53px;font-size:10px;color:#c4c4c4;transform:scaleX(0.8999);transform-origin:0 0;">Layer Name</div>
<div class="t" style="left:268.00px;top:53px;font-size:10px;color:#c4c4c4;transform:scaleX(0.9600);transform-origin:0 0;">Mode</div>
<div class="t" style="left:341.50px;top:53px;font-size:10px;color:#c4c4c4;transform:scaleX(0.9016);transform-origin:0 0;">T</div>
<div class="t" style="left:360.60px;top:53px;font-size:10px;color:#c4c4c4;transform:scaleX(0.9046);transform-origin:0 0;">Track Matte</div>
<div class="t" style="left:479.00px;top:53px;font-size:10px;color:#c4c4c4;transform:scaleX(0.9151);transform-origin:0 0;">Parent &amp; Link</div>
<div style="position:absolute;left:66px;top:51px;width:3px;height:11px;background:#0c0c0c;"></div>
<div style="position:absolute;left:98px;top:51px;width:3px;height:11px;background:#0c0c0c;"></div>
<div style="position:absolute;left:131px;top:51px;width:3px;height:11px;background:#0c0c0c;"></div>
<div style="position:absolute;left:261px;top:51px;width:3px;height:11px;background:#0c0c0c;"></div>
<div style="position:absolute;left:472px;top:51px;width:3px;height:11px;background:#0c0c0c;"></div>
<div style="position:absolute;left:590px;top:51px;width:3px;height:11px;background:#0c0c0c;"></div>
<!-- timeline header -->
<div style="position:absolute;left:606px;top:16px;width:185px;height:10px;background:#0c0c0c;"></div>
<div style="position:absolute;left:615px;top:17px;width:176px;height:8px;background:#6b6b6b;"></div>
<div style="position:absolute;left:607px;top:17px;width:6px;height:8px;background:#4d9ff7;border-radius:4px 0 0 4px;"></div>
<div style="position:absolute;left:614px;top:17px;width:1.5px;height:8px;background:#5b8fd0;"></div>
<div class="t" style="left:607.00px;top:28px;font-size:11px;color:#bdbdbd;transform:scaleX(0.8030);transform-origin:0 0;">0:00s</div>
<div class="t" style="left:668.60px;top:28px;font-size:11px;color:#bdbdbd;transform:scaleX(0.9014);transform-origin:0 0;">05s</div>
<div class="t" style="left:731.50px;top:28px;font-size:11px;color:#bdbdbd;transform:scaleX(0.8732);transform-origin:0 0;">10s</div>
<div style="position:absolute;left:676px;top:40px;width:1px;height:4px;background:#a8a8a8;"></div>
<div style="position:absolute;left:739px;top:40px;width:1px;height:4px;background:#a8a8a8;"></div>
<div style="position:absolute;left:606px;top:45px;width:185px;height:17px;background:#0c0c0c;"></div>
<div style="position:absolute;left:614px;top:46px;width:177px;height:15px;background:#6b6b6b;"></div>
<div style="position:absolute;left:608px;top:46px;width:5px;height:15px;background:#4d9ff7;border-radius:5px 0 0 5px;"></div>
<div style="position:absolute;left:606px;top:61px;width:9px;height:4px;background:#1c1c1c;"></div>
<div style="position:absolute;left:615px;top:62px;width:176px;height:3px;background:#1a22c0;"></div>
<svg style="position:absolute;left:609px;top:31px;" width="12" height="14" viewBox="0 0 12 14"><path d="M0 0 H11 V7 L5.5 13.5 L0 7Z" fill="#4d9ff7"/><rect x="5" y="6" width="1.3" height="8" fill="#d8d8d8"/></svg>
<div style="position:absolute;left:689px;top:62px;width:4px;height:3px;background:#22c02a;"></div><div style="position:absolute;left:694px;top:62px;width:3px;height:3px;background:#22c02a;"></div><div style="position:absolute;left:701px;top:62px;width:2px;height:3px;background:#22c02a;"></div><div style="position:absolute;left:708px;top:62px;width:1px;height:3px;background:#22c02a;"></div><div style="position:absolute;left:716px;top:62px;width:2px;height:3px;background:#22c02a;"></div><div style="position:absolute;left:724px;top:62px;width:3px;height:3px;background:#22c02a;"></div><div style="position:absolute;left:728px;top:62px;width:5px;height:3px;background:#22c02a;"></div><div style="position:absolute;left:739px;top:62px;width:2px;height:3px;background:#22c02a;"></div>

<div style="position:absolute;left:614px;top:45px;width:1px;height:505px;background:#4d9ff7;"></div>

<div style="position:absolute;left:0px;top:550px;width:714px;height:1px;background:#0c0c0c;"></div>
<div style="position:absolute;left:714px;top:550px;width:77px;height:1px;background:#1e1e1e;"></div>
<div style="position:absolute;left:0px;top:551px;width:791px;height:16px;background:#1e1e1e;"></div>
<div style="position:absolute;left:0px;top:567px;width:791px;height:1px;background:#3d8ff2;"></div>
<div class="t" style="left:103.20px;top:554px;font-size:10.8px;color:#c4c4c4;transform:scaleX(0.9944);transform-origin:0 0;">Frame Render Time:</div>
<div class="t" style="left:206.30px;top:554px;font-size:10.8px;color:#5cd3a5;font-weight:bold;transform:scaleX(0.9722);transform-origin:0 0;">0ms</div>
<div class="t" style="left:308.40px;top:554px;font-size:10.8px;color:#c4c4c4;">Toggle Switches / Modes</div>
<svg style="position:absolute;left:6px;top:553px;" width="12" height="12" viewBox="0 0 12 12"><rect x="0.6" y="0.6" width="6" height="6" fill="none" stroke="#b8b8b8" stroke-width="1.1"/><rect x="2.6" y="2.6" width="6" height="6" fill="#1e1e1e" stroke="#b8b8b8" stroke-width="1.1"/><rect x="4.6" y="4.6" width="6.4" height="6.4" fill="#1e1e1e" stroke="#b8b8b8" stroke-width="1.1"/><rect x="7" y="7" width="1.6" height="1.6" fill="#b8b8b8"/></svg>
<div style="position:absolute;left:23px;top:551px;width:15px;height:15px;background:#3c3c3c;border-radius:3px;"></div>
<svg style="position:absolute;left:24px;top:552px;" width="13" height="13" viewBox="0 0 13 13"><circle cx="5" cy="5" r="3.8" fill="none" stroke="#c8c8c8" stroke-width="1.1"/><rect x="6" y="6" width="6" height="6" fill="#3c3c3c" stroke="#c8c8c8" stroke-width="1.1"/></svg>
<svg style="position:absolute;left:43px;top:553px;" width="13" height="12" viewBox="0 0 13 12"><path d="M4.6 0.3 V4.6 L1.2 6 L4.6 7.4 V11.7" fill="none" stroke="#c4c4c4" stroke-width="1.4"/><path d="M8.4 0.3 V4.6 L11.8 6 L8.4 7.4 V11.7" fill="none" stroke="#c4c4c4" stroke-width="1.4"/><rect x="5.4" y="0.3" width="2.2" height="11.4" fill="#555"/><rect x="6" y="0.3" width="1" height="11.4" fill="#2a2a2a"/></svg>
<svg style="position:absolute;left:62px;top:554px;" width="14" height="10" viewBox="0 0 14 10"><circle cx="4.5" cy="4.5" r="4" fill="#b0b0b0"/><path d="M0 9 H12 L11 8 H1Z" fill="#b0b0b0"/><path d="M8.5 8 L10 2 M10 2 L11.5 0.5 M11 2 L13 1.5" stroke="#b0b0b0" stroke-width="1"/></svg>
<svg style="position:absolute;left:612px;top:556px;" width="11" height="5" viewBox="0 0 11 5"><path d="M0 5 L3 2 L4.5 3 L7 0 L11 5Z" fill="#b0b0b0"/></svg>
<svg style="position:absolute;left:629px;top:554px;" width="12" height="11" viewBox="0 0 12 11"><circle cx="5.8" cy="5.2" r="4.2" fill="none" stroke="#c8c8c8" stroke-width="1.5"/></svg>
<div style="position:absolute;left:644px;top:558px;width:45px;height:2px;background:#5a5a5a;"></div>
<svg style="position:absolute;left:693px;top:555px;" width="17" height="8" viewBox="0 0 17 8"><path d="M0 8 L5 2 L6 3 L2 8Z" fill="#b0b0b0"/><path d="M3.5 8 L9.5 0.5 L16.5 8Z" fill="#b0b0b0"/></svg>

</body></html>
